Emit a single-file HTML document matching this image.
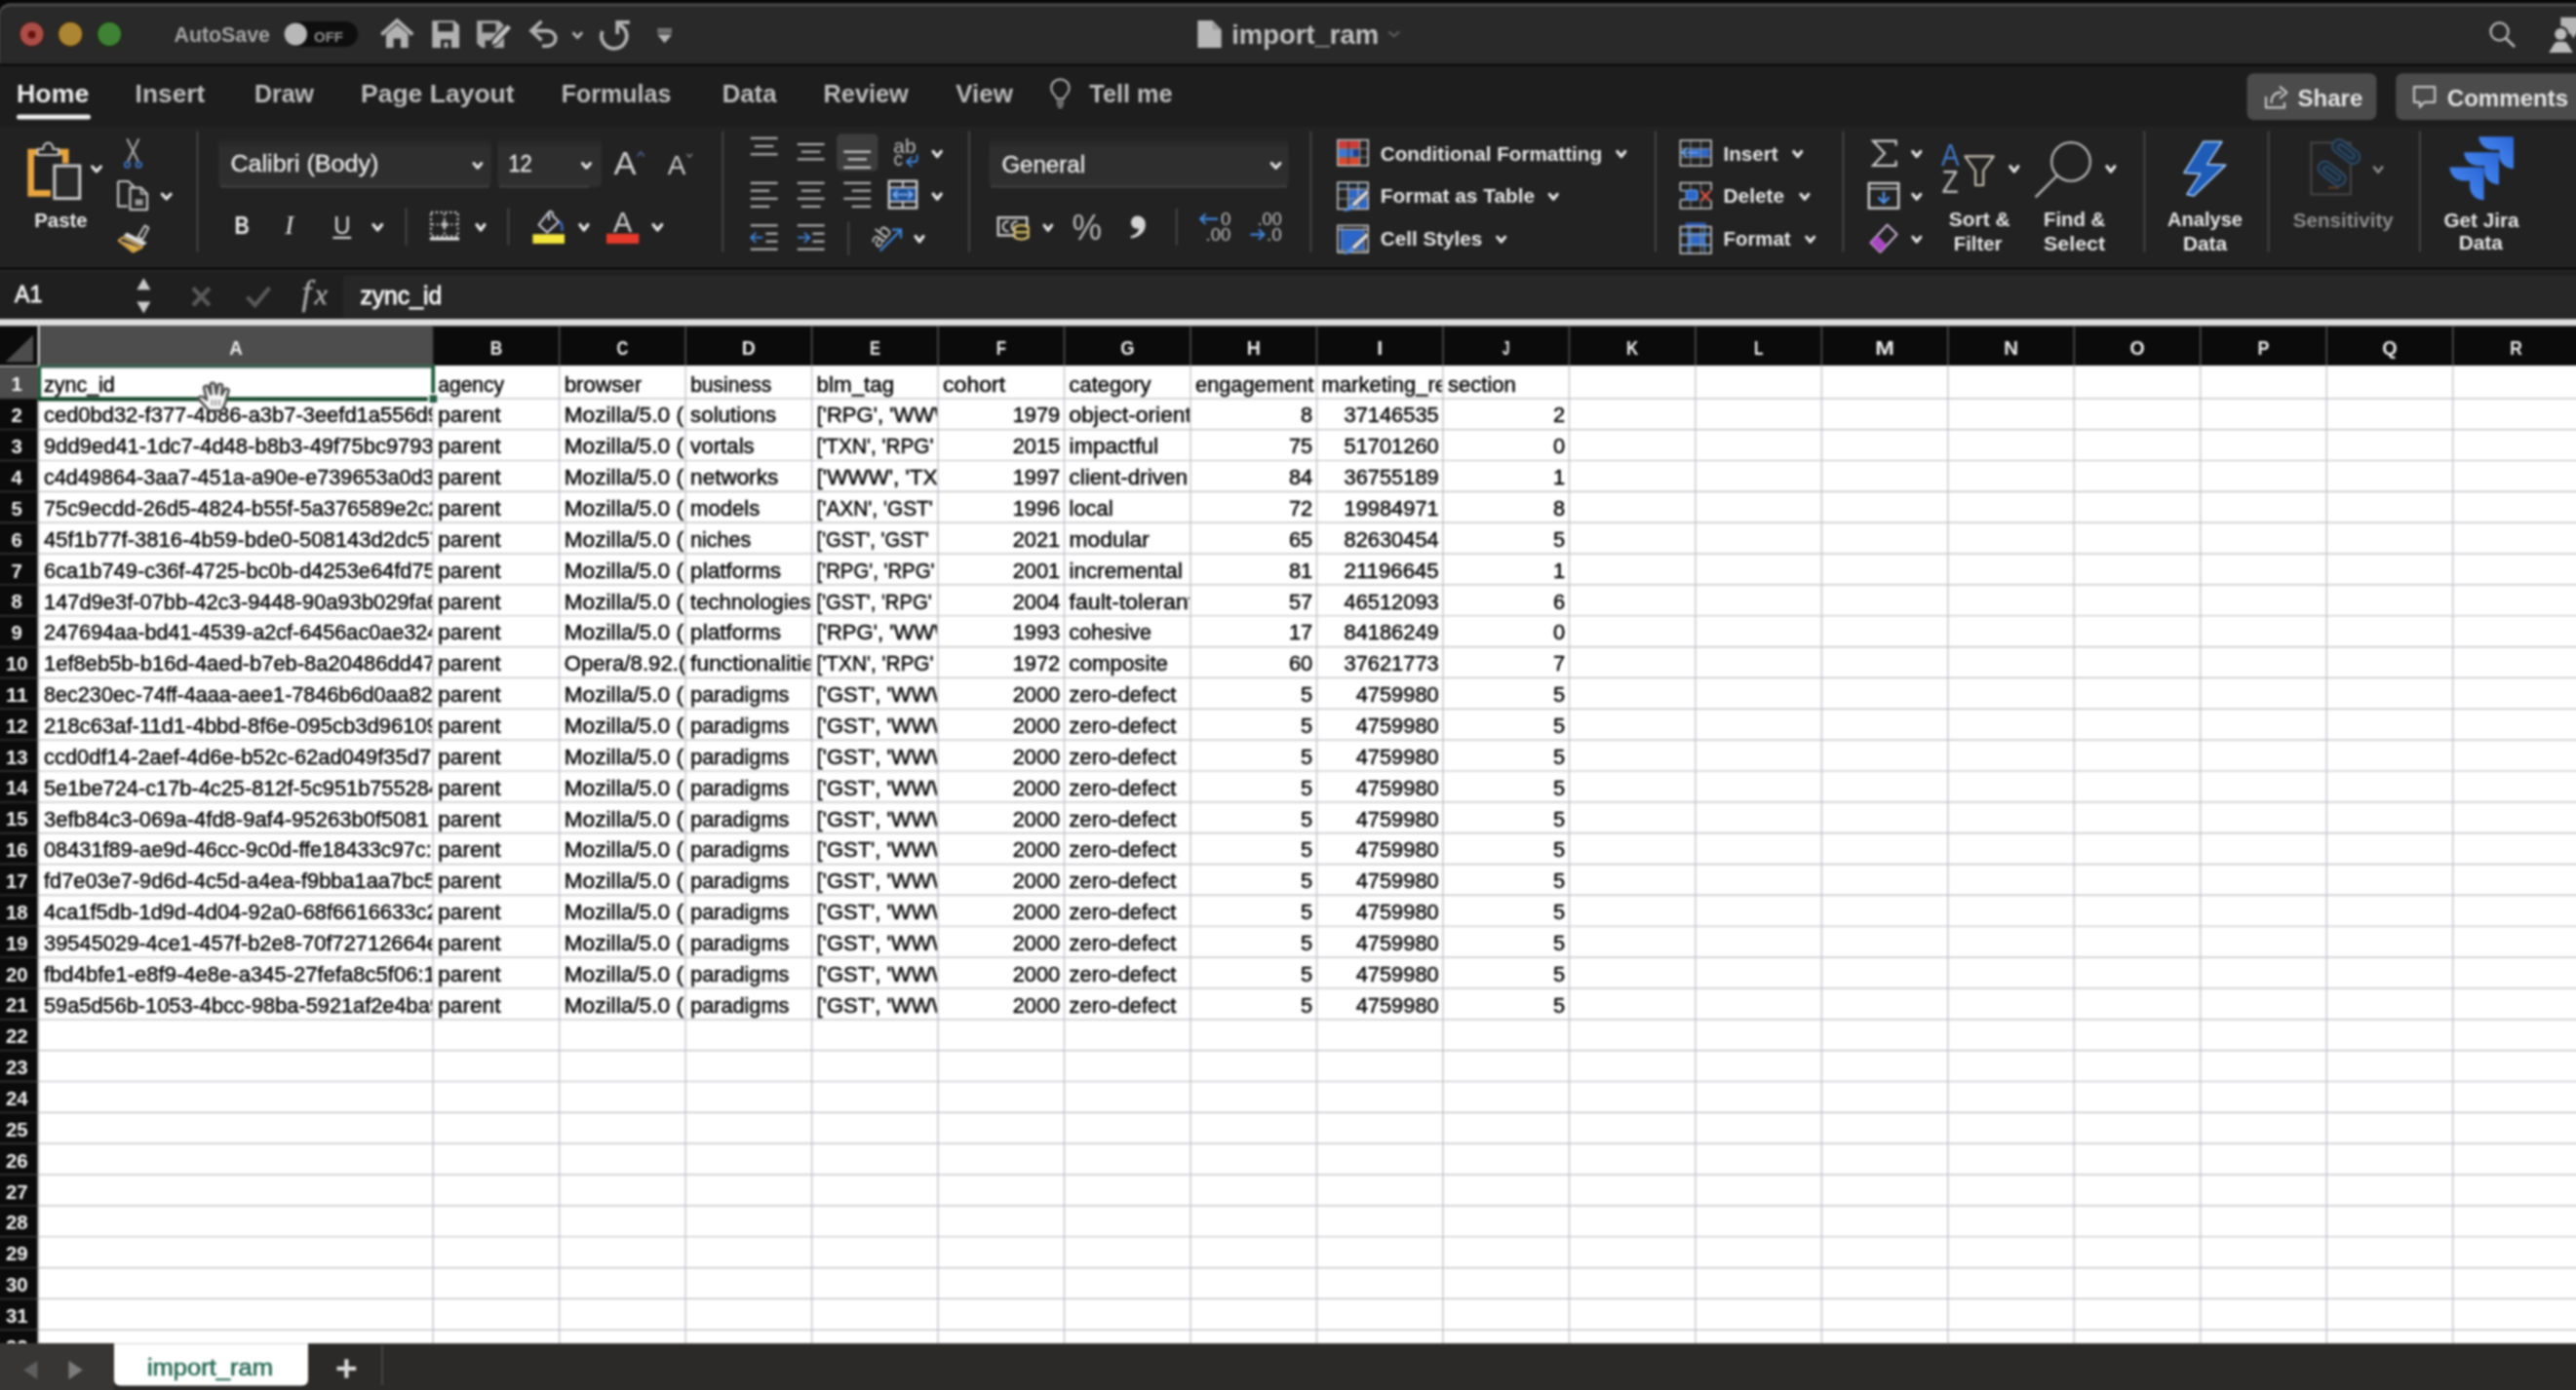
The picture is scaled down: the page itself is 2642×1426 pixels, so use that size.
<!DOCTYPE html>
<html lang="en"><head><meta charset="utf-8"><title>import_ram</title>
<style>
html,body{margin:0;padding:0;background:#1e1e1e;overflow:hidden;width:2642px;height:1426px}
#app{position:relative;width:2642px;height:1426px;overflow:hidden;background:#ffffff}
svg{display:block;position:absolute;left:-30px;top:-30px}
text{white-space:pre}
</style></head>
<body>
<div id="app">
<svg width="2702" height="1486" viewBox="-30 -30 2702 1486">
<filter id="soft" color-interpolation-filters="sRGB" filterUnits="userSpaceOnUse" x="-30" y="-30" width="2702" height="1486"><feGaussianBlur stdDeviation="0.8"/></filter>
<g filter="url(#soft)">
<rect x="-30.00" y="-30.00" width="2702.00" height="100.00" fill="#070707"/>
<path d="M-1.5 68 V15.2 A12 12 0 0 1 10.5 3.2 H2700 V68 Z" fill="#484848"/>
<path d="M0.2 68 V15.4 A10.3 8.8 0 0 1 10.5 6.6 H2700 V68 Z" fill="#292929"/>
<rect x="-30.00" y="65.30" width="2702.00" height="3.00" fill="#0d0d0d"/>
<circle cx="32.6" cy="35" r="13.2" fill="#3a1c18"/><circle cx="32.6" cy="35" r="11.9" fill="#ac4e48"/>
<circle cx="72.2" cy="35" r="13.2" fill="#3a2a0c"/><circle cx="72.2" cy="35" r="11.9" fill="#ad8633"/>
<circle cx="112.2" cy="35" r="13.2" fill="#1a3012"/><circle cx="112.2" cy="35" r="11.9" fill="#3f8135"/>
<circle cx="32.6" cy="35.4" r="4" fill="#66120c"/>
<text x="178.50" y="43.20" font-family="'Liberation Sans', sans-serif" font-size="21.6" fill="#a6a6a6" font-weight="700" textLength="98.50" lengthAdjust="spacingAndGlyphs">AutoSave</text>
<rect x="292.00" y="22.00" width="75.00" height="26.00" fill="#0e0e0e" rx="13"/>
<circle cx="303.3" cy="35" r="11.6" fill="#b8b8b8"/>
<text x="322.00" y="43.00" font-family="'Liberation Sans', sans-serif" font-size="15.5" fill="#909090" font-weight="700" textLength="30.00" lengthAdjust="spacingAndGlyphs">OFF</text>
<path d="M391.4 35.5 L407.3 21 L423.2 35.5" fill="none" stroke="#b2b2b2" stroke-width="3.8" stroke-linejoin="miter"/>
<path d="M396 35 L407.3 25.2 L418.6 35 V48.9 H411 V39.5 H403.6 V48.9 H396 Z" fill="#b2b2b2"/>
<path d="M443.3 21.2 H466 L471 26.2 V48.9 H443.3 Z" fill="#b2b2b2"/>
<rect x="449.20" y="23.20" width="15.60" height="9.20" fill="#292929"/>
<rect x="452.00" y="40.50" width="11.00" height="8.40" fill="#292929"/>
<rect x="455.50" y="43.50" width="4.00" height="5.40" fill="#b2b2b2"/>
<path d="M489.2 21.2 H512 L517 26.2 V48.9 H494 L489.2 44.5 Z" fill="#a9a9a9"/>
<rect x="494.60" y="24.00" width="14.00" height="9.50" fill="#292929"/>
<rect x="497.50" y="41.50" width="9.00" height="7.40" fill="#292929"/>
<path d="M503.5 41 L520.5 22.5 L526.5 28 L509.5 46.2 L501.8 48.6 Z" fill="#292929"/>
<path d="M505.8 41 L520.4 25.4 L524 28.7 L509.3 44.4 L504.2 46 Z" fill="#c4c4c4"/>
<path d="M555.5 21.8 L545 31.6 L555.5 41.4" fill="none" stroke="#b2b2b2" stroke-width="3.6" stroke-linejoin="miter"/>
<path d="M546 31.6 H561 C572 31.6 573.5 46.5 560.5 47.2 H556" fill="none" stroke="#b2b2b2" stroke-width="3.6"/>
<path d="M588.25 33.99 L592.30 38.61 L596.34 33.99" fill="none" stroke="#b4b4b4" stroke-width="2.91" stroke-linecap="round" stroke-linejoin="round"/>
<path d="M617.9 32 A12.9 12.9 0 1 0 640.6 29.8 L634 23.6" fill="none" stroke="#b2b2b2" stroke-width="3.7"/>
<path d="M633.2 35 V22.9 H645.8" fill="none" stroke="#b2b2b2" stroke-width="3.7" stroke-linejoin="miter"/>
<rect x="674.30" y="29.40" width="14.70" height="1.50" fill="#a8a8a8"/>
<rect x="674.30" y="32.20" width="14.70" height="1.50" fill="#a8a8a8"/>
<path d="M674.3 35.6 H689 L681.65 44.2 Z" fill="#b4b4b4"/>
<path d="M1228.4 21.1 H1243.6 L1252.7 30.4 V49.1 H1228.4 Z" fill="#b8b8b8"/>
<path d="M1243.6 21.1 V30.4 H1252.7 Z" fill="#9a9a9a"/>
<text x="1263.20" y="44.70" font-family="'Liberation Sans', sans-serif" font-size="27" fill="#c0c0c0" font-weight="700" textLength="151.00" lengthAdjust="spacingAndGlyphs">import_ram</text>
<path d="M1424.91 33.00 L1429.70 37.20 L1434.49 33.00" fill="none" stroke="#555555" stroke-width="2.522" stroke-linecap="round" stroke-linejoin="round"/>
<circle cx="2563.5" cy="32.4" r="9" fill="none" stroke="#b8b8b8" stroke-width="2.3"/>
<line x1="2570.20" y1="39.40" x2="2578.20" y2="47.20" stroke="#b8b8b8" stroke-width="2.8" stroke-linecap="round"/>
<path d="M2626.3 17.8 H2660 V34.4 H2642 L2639.4 39.6 L2636.4 34.4 H2626.3 Z" fill="#b6b6b6"/>
<circle cx="2626.3" cy="35" r="8.3" fill="#292929"/>
<circle cx="2626.3" cy="35" r="6.1" fill="#bcbcbc"/>
<path d="M2614.2 54 L2619.6 45 Q2621 42.8 2623.6 42.8 H2629.4 Q2632 42.8 2633.4 45 L2638.8 54 Z" fill="#bcbcbc"/>
<rect x="-30.00" y="67.80" width="2702.00" height="64.00" fill="#1d1d1d"/>
<text x="17.00" y="104.80" font-family="'Liberation Sans', sans-serif" font-size="25.5" fill="#ededed" font-weight="700" textLength="74.30" lengthAdjust="spacingAndGlyphs">Home</text>
<rect x="17.00" y="117.40" width="76.00" height="5.00" fill="#ececec" rx="2.5"/>
<text x="138.60" y="104.80" font-family="'Liberation Sans', sans-serif" font-size="25.5" fill="#bcbcbc" font-weight="700" textLength="71.70" lengthAdjust="spacingAndGlyphs">Insert</text>
<text x="260.90" y="104.80" font-family="'Liberation Sans', sans-serif" font-size="25.5" fill="#bcbcbc" font-weight="700" textLength="61.10" lengthAdjust="spacingAndGlyphs">Draw</text>
<text x="370.00" y="104.80" font-family="'Liberation Sans', sans-serif" font-size="25.5" fill="#bcbcbc" font-weight="700" textLength="157.60" lengthAdjust="spacingAndGlyphs">Page Layout</text>
<text x="575.80" y="104.80" font-family="'Liberation Sans', sans-serif" font-size="25.5" fill="#bcbcbc" font-weight="700" textLength="112.50" lengthAdjust="spacingAndGlyphs">Formulas</text>
<text x="740.70" y="104.80" font-family="'Liberation Sans', sans-serif" font-size="25.5" fill="#bcbcbc" font-weight="700" textLength="55.80" lengthAdjust="spacingAndGlyphs">Data</text>
<text x="844.50" y="104.80" font-family="'Liberation Sans', sans-serif" font-size="25.5" fill="#bcbcbc" font-weight="700" textLength="87.30" lengthAdjust="spacingAndGlyphs">Review</text>
<text x="980.30" y="104.80" font-family="'Liberation Sans', sans-serif" font-size="25.5" fill="#bcbcbc" font-weight="700" textLength="58.60" lengthAdjust="spacingAndGlyphs">View</text>
<text x="1117.30" y="104.80" font-family="'Liberation Sans', sans-serif" font-size="25.5" fill="#bcbcbc" font-weight="700" textLength="85.40" lengthAdjust="spacingAndGlyphs">Tell me</text>
<path d="M1083.8 101.4 C1083.8 98.4 1078.2 96 1078.2 90.4 C1078.2 85 1082.3 81.4 1087.4 81.4 C1092.5 81.4 1096.6 85 1096.6 90.4 C1096.6 96 1091 98.4 1091 101.4 Z" fill="none" stroke="#a6a6a6" stroke-width="2.1" stroke-linejoin="round"/>
<line x1="1083.80" y1="104.60" x2="1091.00" y2="104.60" stroke="#a6a6a6" stroke-width="1.6" />
<line x1="1083.80" y1="107.40" x2="1091.00" y2="107.40" stroke="#a6a6a6" stroke-width="1.6" />
<line x1="1085.20" y1="110.20" x2="1089.60" y2="110.20" stroke="#a6a6a6" stroke-width="1.6" />
<rect x="2304.60" y="75.20" width="132.80" height="47.80" fill="#4b4b4b" rx="7"/>
<path d="M2324 99 V110.4 H2343 V105" fill="none" stroke="#c4c4c4" stroke-width="2.2"/>
<path d="M2329.5 106 C2329.5 98 2334 94.6 2340 94.6" fill="none" stroke="#c4c4c4" stroke-width="2.2"/>
<path d="M2338 88.6 L2345.4 94.8 L2338 101" fill="none" stroke="#c4c4c4" stroke-width="2.2" stroke-linejoin="round"/>
<text x="2356.60" y="108.90" font-family="'Liberation Sans', sans-serif" font-size="23.6" fill="#e4e4e4" font-weight="700" textLength="66.70" lengthAdjust="spacingAndGlyphs">Share</text>
<rect x="2457.30" y="75.20" width="230.00" height="47.80" fill="#4b4b4b" rx="7"/>
<path d="M2476 89.2 H2497.2 V104.8 H2486.5 L2481.8 110 V104.8 H2476 Z" fill="none" stroke="#c4c4c4" stroke-width="2.2" stroke-linejoin="round"/>
<text x="2509.80" y="108.90" font-family="'Liberation Sans', sans-serif" font-size="23.6" fill="#e4e4e4" font-weight="700" textLength="124.30" lengthAdjust="spacingAndGlyphs">Comments</text>
<rect x="-30.00" y="130.00" width="2702.00" height="143.40" fill="#222222"/>
<rect x="-30.00" y="273.20" width="2702.00" height="4.60" fill="#0d0d0d"/>
<line x1="202.50" y1="134.50" x2="202.50" y2="258.50" stroke="#4a4a4a" stroke-width="1.68" />
<line x1="741.30" y1="134.50" x2="741.30" y2="258.50" stroke="#4a4a4a" stroke-width="1.68" />
<line x1="994.00" y1="134.50" x2="994.00" y2="258.50" stroke="#4a4a4a" stroke-width="1.68" />
<line x1="1344.40" y1="134.50" x2="1344.40" y2="258.50" stroke="#4a4a4a" stroke-width="1.68" />
<line x1="1697.90" y1="134.50" x2="1697.90" y2="258.50" stroke="#4a4a4a" stroke-width="1.68" />
<line x1="1890.40" y1="134.50" x2="1890.40" y2="258.50" stroke="#4a4a4a" stroke-width="1.68" />
<line x1="2199.40" y1="134.50" x2="2199.40" y2="258.50" stroke="#4a4a4a" stroke-width="1.68" />
<line x1="2326.60" y1="134.50" x2="2326.60" y2="258.50" stroke="#4a4a4a" stroke-width="1.68" />
<line x1="2481.90" y1="134.50" x2="2481.90" y2="258.50" stroke="#4a4a4a" stroke-width="1.68" />
<line x1="416.50" y1="213.50" x2="416.50" y2="251.60" stroke="#4a4a4a" stroke-width="1.68" />
<line x1="521.40" y1="213.50" x2="521.40" y2="251.60" stroke="#4a4a4a" stroke-width="1.68" />
<line x1="1206.70" y1="213.50" x2="1206.70" y2="251.60" stroke="#4a4a4a" stroke-width="1.68" />
<line x1="870.30" y1="227.50" x2="870.30" y2="262.00" stroke="#4a4a4a" stroke-width="1.68" />
<path d="M51.9 198.4 H31.7 V156 H67.2 V167.6" fill="none" stroke="#e6a53e" stroke-width="6.6" stroke-linejoin="miter"/>
<path d="M38.6 159 V153 H44.4 C44.4 144.4 54.4 144.4 54.4 153 H60.2 V159 Z" fill="#222222" stroke="#c8c8c8" stroke-width="2.18" stroke-linejoin="round"/>
<rect x="55.90" y="170.10" width="25.90" height="33.50" fill="#292929" stroke="#c8c8c8" stroke-width="3"/>
<path d="M94.60 170.91 L99.00 175.89 L103.40 170.91" fill="none" stroke="#e6e6e6" stroke-width="3.104" stroke-linecap="round" stroke-linejoin="round"/>
<text x="35.20" y="233.20" font-family="'Liberation Sans', sans-serif" font-size="20.5" fill="#e6e6e6" font-weight="700" textLength="54.50" lengthAdjust="spacingAndGlyphs">Paste</text>
<line x1="130.40" y1="142.40" x2="141.60" y2="165.40" stroke="#b0b0b0" stroke-width="2.02" />
<line x1="142.40" y1="142.40" x2="131.20" y2="165.40" stroke="#b0b0b0" stroke-width="2.02" />
<circle cx="130.6" cy="169" r="2.7" fill="none" stroke="#3f6fb8" stroke-width="2"/>
<circle cx="142.2" cy="169" r="2.7" fill="none" stroke="#3f6fb8" stroke-width="2"/>
<path d="M121.2 186 H131.6 L137.4 191.6 M121.2 186 V211.6 H131" fill="none" stroke="#c4c4c4" stroke-width="2.18"/>
<path d="M133.4 192.6 H144.6 L151 199 V215.2 H133.4 Z" fill="#222222" stroke="#c4c4c4" stroke-width="2.18" stroke-linejoin="round"/>
<path d="M144.6 192.6 V199 H151" fill="none" stroke="#c4c4c4" stroke-width="1.68"/>
<rect x="138.60" y="204.40" width="8.00" height="6.20" fill="#9a9a9a"/>
<path d="M166.30 199.11 L170.70 204.09 L175.10 199.11" fill="none" stroke="#e6e6e6" stroke-width="3.104" stroke-linecap="round" stroke-linejoin="round"/>
<path d="M141.5 243 L148.6 231.4 L152.4 233.8 L146.2 245.6 Z" fill="#222222" stroke="#cfcfcf" stroke-width="1.85" stroke-linejoin="round"/>
<path d="M130 238.4 L150.8 249 L146.6 252.2 L126.6 242 Z" fill="#dcdcdc"/>
<path d="M126 243.6 L146 253.6 L136.4 258.6 L121.6 246.8 Z" fill="#1d2a4a" stroke="#e6b24a" stroke-width="1.85" stroke-linejoin="round"/>
<path d="M124 247 L136.6 257.6 L143 254 Z" fill="#e6b24a"/>
<linearGradient id="bx" x1="0" y1="0" x2="0" y2="1"><stop offset="0" stop-color="#232323"/><stop offset="0.24" stop-color="#2e2e2e"/><stop offset="1" stop-color="#2f2f2f"/></linearGradient>
<rect x="224.30" y="141.00" width="279.30" height="51.30" fill="url(#bx)" rx="5"/>
<rect x="226.00" y="190.60" width="276.00" height="1.70" fill="#474747"/>
<text x="236.50" y="176.20" font-family="'Liberation Sans', sans-serif" font-size="23" fill="#ededed" textLength="151.80" lengthAdjust="spacingAndGlyphs" stroke="#ededed" stroke-width="0.3">Calibri (Body)</text>
<path d="M485.95 167.58 L489.90 172.22 L493.85 167.58" fill="none" stroke="#e6e6e6" stroke-width="3.007" stroke-linecap="round" stroke-linejoin="round"/>
<rect x="510.50" y="141.00" width="106.30" height="51.30" fill="url(#bx)" rx="5"/>
<rect x="512.00" y="190.60" width="92.00" height="1.70" fill="#474747"/>
<text x="521.40" y="176.40" font-family="'Liberation Sans', sans-serif" font-size="23" fill="#ededed" textLength="24.30" lengthAdjust="spacingAndGlyphs" stroke="#ededed" stroke-width="0.3">12</text>
<path d="M597.45 167.58 L601.50 172.22 L605.55 167.58" fill="none" stroke="#e6e6e6" stroke-width="3.007" stroke-linecap="round" stroke-linejoin="round"/>
<text x="629.60" y="178.60" font-family="'Liberation Sans', sans-serif" font-size="34" fill="#cfcfcf" textLength="23.10" lengthAdjust="spacingAndGlyphs">A</text>
<path d="M653.8 160.4 L657.2 156 L660.6 160.4" fill="none" stroke="#4a5a86" stroke-width="1.85"/>
<text x="684.70" y="178.60" font-family="'Liberation Sans', sans-serif" font-size="27" fill="#cfcfcf" textLength="18.60" lengthAdjust="spacingAndGlyphs">A</text>
<path d="M704.4 158 L707.2 161 L710 158" fill="none" stroke="#7a7a7a" stroke-width="1.68"/>
<text x="240.40" y="239.70" font-family="'Liberation Sans', sans-serif" font-size="25" fill="#e6e6e6" font-weight="700" textLength="15.30" lengthAdjust="spacingAndGlyphs">B</text>
<text x="292.20" y="239.70" font-family="'Liberation Serif', serif" font-size="27" fill="#e6e6e6" font-style="italic">I</text>
<text x="342.20" y="239.50" font-family="'Liberation Sans', sans-serif" font-size="25" fill="#dcdcdc" textLength="17.30" lengthAdjust="spacingAndGlyphs">U</text>
<rect x="341.40" y="242.80" width="18.80" height="2.20" fill="#dcdcdc"/>
<path d="M382.95 230.55 L387.30 236.05 L391.65 230.55" fill="none" stroke="#e6e6e6" stroke-width="3.2009999999999996" stroke-linecap="round" stroke-linejoin="round"/>
<rect x="442" y="217.8" width="27.6" height="24.6" fill="none" stroke="#d0d0d0" stroke-width="2.2" stroke-dasharray="2.2 2.6"/>
<line x1="455.80" y1="219.00" x2="455.80" y2="242.00" stroke="#d0d0d0" stroke-width="1.85" stroke-dasharray="2.2 2.6"/>
<line x1="443.00" y1="230.40" x2="469.00" y2="230.40" stroke="#d0d0d0" stroke-width="1.85" stroke-dasharray="2.2 2.6"/>
<line x1="452.40" y1="230.40" x2="459.60" y2="230.40" stroke="#bdbdbd" stroke-width="3.2" />
<line x1="455.80" y1="226.60" x2="455.80" y2="234.20" stroke="#bdbdbd" stroke-width="3.2" />
<rect x="440.80" y="243.60" width="30.20" height="2.80" fill="#f0f0f0"/>
<path d="M489.05 230.55 L493.00 236.05 L496.95 230.55" fill="none" stroke="#e6e6e6" stroke-width="3.2009999999999996" stroke-linecap="round" stroke-linejoin="round"/>
<path d="M563 217.6 L552.6 230.6 L561.2 238.6 L573.2 227.6 L566.8 221.2 V218.4 Q564.8 215.6 563 217.6 V226" fill="none" stroke="#c9c9d6" stroke-width="2.02" stroke-linejoin="round"/>
<path d="M573.4 227 Q577.4 229.6 576.4 237" fill="none" stroke="#3d6fd0" stroke-width="2.35"/>
<rect x="546.40" y="240.30" width="32.60" height="9.60" fill="#f4e63e"/>
<path d="M594.85 230.55 L598.90 236.05 L602.95 230.55" fill="none" stroke="#e6e6e6" stroke-width="3.2009999999999996" stroke-linecap="round" stroke-linejoin="round"/>
<text x="629.00" y="238.40" font-family="'Liberation Sans', sans-serif" font-size="29" fill="#d2d2d2" textLength="19.20" lengthAdjust="spacingAndGlyphs">A</text>
<rect x="622.00" y="239.70" width="33.30" height="10.20" fill="#e63a2b"/>
<path d="M670.05 230.55 L674.40 236.05 L678.75 230.55" fill="none" stroke="#e6e6e6" stroke-width="3.2009999999999996" stroke-linecap="round" stroke-linejoin="round"/>
<line x1="769.80" y1="141.80" x2="797.60" y2="141.80" stroke="#bebebe" stroke-width="2.02" />
<line x1="774.00" y1="150.00" x2="793.40" y2="150.00" stroke="#bebebe" stroke-width="2.02" />
<line x1="769.80" y1="158.30" x2="797.60" y2="158.30" stroke="#bebebe" stroke-width="2.02" />
<line x1="817.80" y1="148.00" x2="845.60" y2="148.00" stroke="#bebebe" stroke-width="2.02" />
<line x1="822.00" y1="155.70" x2="841.40" y2="155.70" stroke="#bebebe" stroke-width="2.02" />
<line x1="817.80" y1="163.40" x2="845.60" y2="163.40" stroke="#bebebe" stroke-width="2.02" />
<rect x="858.10" y="137.20" width="42.30" height="38.40" fill="#3c3c3c" rx="5"/>
<line x1="865.30" y1="155.70" x2="893.10" y2="155.70" stroke="#d8d8d8" stroke-width="2.02" />
<line x1="869.50" y1="163.40" x2="888.90" y2="163.40" stroke="#d8d8d8" stroke-width="2.02" />
<line x1="865.30" y1="171.80" x2="893.10" y2="171.80" stroke="#d8d8d8" stroke-width="2.02" />
<line x1="769.80" y1="187.80" x2="797.60" y2="187.80" stroke="#bebebe" stroke-width="2.02" />
<line x1="769.80" y1="195.70" x2="789.20" y2="195.70" stroke="#bebebe" stroke-width="2.02" />
<line x1="769.80" y1="203.80" x2="797.60" y2="203.80" stroke="#bebebe" stroke-width="2.02" />
<line x1="769.80" y1="211.90" x2="789.20" y2="211.90" stroke="#bebebe" stroke-width="2.02" />
<line x1="817.80" y1="187.80" x2="845.60" y2="187.80" stroke="#bebebe" stroke-width="2.02" />
<line x1="822.00" y1="195.70" x2="841.40" y2="195.70" stroke="#bebebe" stroke-width="2.02" />
<line x1="817.80" y1="203.80" x2="845.60" y2="203.80" stroke="#bebebe" stroke-width="2.02" />
<line x1="822.00" y1="211.90" x2="841.40" y2="211.90" stroke="#bebebe" stroke-width="2.02" />
<line x1="865.30" y1="187.80" x2="893.10" y2="187.80" stroke="#bebebe" stroke-width="2.02" />
<line x1="873.70" y1="195.70" x2="893.10" y2="195.70" stroke="#bebebe" stroke-width="2.02" />
<line x1="865.30" y1="203.80" x2="893.10" y2="203.80" stroke="#bebebe" stroke-width="2.02" />
<line x1="873.70" y1="211.90" x2="893.10" y2="211.90" stroke="#bebebe" stroke-width="2.02" />
<line x1="769.80" y1="231.30" x2="797.60" y2="231.30" stroke="#bebebe" stroke-width="2.02" />
<line x1="785.40" y1="239.70" x2="797.60" y2="239.70" stroke="#bebebe" stroke-width="2.02" />
<line x1="785.40" y1="247.70" x2="797.60" y2="247.70" stroke="#bebebe" stroke-width="2.02" />
<line x1="769.80" y1="255.70" x2="797.60" y2="255.70" stroke="#bebebe" stroke-width="2.02" />
<line x1="817.80" y1="231.30" x2="845.60" y2="231.30" stroke="#bebebe" stroke-width="2.02" />
<line x1="833.40" y1="239.70" x2="845.60" y2="239.70" stroke="#bebebe" stroke-width="2.02" />
<line x1="833.40" y1="247.70" x2="845.60" y2="247.70" stroke="#bebebe" stroke-width="2.02" />
<line x1="817.80" y1="255.70" x2="845.60" y2="255.70" stroke="#bebebe" stroke-width="2.02" />
<path d="M782.4 243.7 H770.6 M775.4 238.6 L770.2 243.7 L775.4 248.8" fill="none" stroke="#3f86dc" stroke-width="1.76"/>
<path d="M818 243.7 H829.8 M825 238.6 L830.2 243.7 L825 248.8" fill="none" stroke="#3f86dc" stroke-width="1.76"/>
<text x="916.30" y="156.60" font-family="'Liberation Sans', sans-serif" font-size="21" fill="#bcbcbc" textLength="23.30" lengthAdjust="spacingAndGlyphs">ab</text>
<text x="916.60" y="170.20" font-family="'Liberation Sans', sans-serif" font-size="21" fill="#bcbcbc" textLength="9.40" lengthAdjust="spacingAndGlyphs">c</text>
<path d="M940.6 158.6 V163.4 Q940.6 166 938 166 H930.6 M935.4 160.8 L930 166 L935.4 171.2" fill="none" stroke="#3f86dc" stroke-width="1.85" stroke-linejoin="round"/>
<path d="M957.15 155.35 L961.20 160.65 L965.25 155.35" fill="none" stroke="#e6e6e6" stroke-width="3.2009999999999996" stroke-linecap="round" stroke-linejoin="round"/>
<rect x="911.80" y="185.80" width="28.40" height="27.60" fill="#222222" stroke="#cfcfcf" stroke-width="2.4"/>
<rect x="913.20" y="192.60" width="25.60" height="14.00" fill="#1f4f95"/>
<line x1="926.00" y1="186.00" x2="926.00" y2="192.40" stroke="#cfcfcf" stroke-width="1.85" />
<line x1="926.00" y1="206.80" x2="926.00" y2="213.20" stroke="#cfcfcf" stroke-width="1.85" />
<line x1="912.00" y1="192.40" x2="940.00" y2="192.40" stroke="#cfcfcf" stroke-width="1.68" />
<line x1="912.00" y1="206.80" x2="940.00" y2="206.80" stroke="#cfcfcf" stroke-width="1.68" />
<path d="M916.6 199.6 H935.4 M920.6 195.6 L916.4 199.6 L920.6 203.6 M931.4 195.6 L935.6 199.6 L931.4 203.6" fill="none" stroke="#7fb2f2" stroke-width="1.85"/>
<path d="M957.15 198.95 L961.20 204.25 L965.25 198.95" fill="none" stroke="#e6e6e6" stroke-width="3.2009999999999996" stroke-linecap="round" stroke-linejoin="round"/>
<g transform="rotate(-52 905 243)">
<text x="893.00" y="247.50" font-family="'Liberation Sans', sans-serif" font-size="21" fill="#c9c9c9" textLength="23.00" lengthAdjust="spacingAndGlyphs">ab</text>
</g>
<path d="M902.6 257.6 L923.4 236.4 M915 235.6 H924 V244.6" fill="none" stroke="#3f86dc" stroke-width="2.18"/>
<path d="M939.05 242.55 L943.00 247.85 L946.95 242.55" fill="none" stroke="#e6e6e6" stroke-width="3.2009999999999996" stroke-linecap="round" stroke-linejoin="round"/>
<rect x="1014.50" y="141.00" width="307.00" height="51.30" fill="url(#bx)" rx="5"/>
<rect x="1016.00" y="190.60" width="304.00" height="1.70" fill="#474747"/>
<text x="1027.40" y="176.60" font-family="'Liberation Sans', sans-serif" font-size="23" fill="#ededed" textLength="85.60" lengthAdjust="spacingAndGlyphs" stroke="#ededed" stroke-width="0.3">General</text>
<path d="M1304.25 167.48 L1308.60 172.32 L1312.95 167.48" fill="none" stroke="#e6e6e6" stroke-width="3.007" stroke-linecap="round" stroke-linejoin="round"/>
<rect x="1023.80" y="223.20" width="29.40" height="18.20" fill="#222222" stroke="#d0d0d0" stroke-width="2.4"/>
<path d="M1034.6 227.4 A5 5 0 1 0 1034.6 237.2 M1043.6 227.4 A5 5 0 1 0 1043.6 237.2" fill="none" stroke="#d0d0d0" stroke-width="2.02"/>
<path d="M1040.6 233 Q1047.6 229 1054.6 233 V243.4 Q1047.6 247.6 1040.6 243.4 Z" fill="#2a2618" stroke="#e9d27a" stroke-width="2.02"/>
<line x1="1041.60" y1="238.20" x2="1053.60" y2="238.20" stroke="#e9d27a" stroke-width="2.02" />
<path d="M1071.10 231.11 L1074.90 236.29 L1078.70 231.11" fill="none" stroke="#e6e6e6" stroke-width="3.104" stroke-linecap="round" stroke-linejoin="round"/>
<text x="1099.40" y="245.60" font-family="'Liberation Sans', sans-serif" font-size="37" fill="#bdbdbd" textLength="30.50" lengthAdjust="spacingAndGlyphs">%</text>
<path d="M1166.4 221.4 C1171.6 221.4 1174.8 225 1174.8 230.4 C1174.8 237.6 1169.4 242.6 1160.2 244.6 L1159.4 242.6 C1164.6 241 1167.6 238.4 1168 234.6 C1163.6 235.2 1160 232.4 1160 228.2 C1160 224.2 1162.8 221.4 1166.4 221.4 Z" fill="#d4d4d4"/>
<text x="1252.00" y="230.60" font-family="'Liberation Sans', sans-serif" font-size="19" fill="#c4c4c4" textLength="10.40" lengthAdjust="spacingAndGlyphs">0</text>
<text x="1236.60" y="246.60" font-family="'Liberation Sans', sans-serif" font-size="19" fill="#c4c4c4" textLength="25.80" lengthAdjust="spacingAndGlyphs">.00</text>
<path d="M1249 224.6 H1231.4 M1236.6 219.4 L1231.2 224.6 L1236.6 229.8" fill="none" stroke="#3f86dc" stroke-width="2.1"/>
<text x="1289.60" y="230.60" font-family="'Liberation Sans', sans-serif" font-size="19" fill="#c4c4c4" textLength="25.10" lengthAdjust="spacingAndGlyphs">.00</text>
<text x="1299.00" y="246.60" font-family="'Liberation Sans', sans-serif" font-size="19" fill="#c4c4c4" textLength="15.70" lengthAdjust="spacingAndGlyphs">.0</text>
<path d="M1282.4 240.6 H1296 M1291 235.4 L1296.4 240.6 L1291 245.8" fill="none" stroke="#3f86dc" stroke-width="2.1"/>
<rect x="1373.00" y="144.60" width="21.40" height="7.60" fill="#cf3b36"/>
<rect x="1373.00" y="153.20" width="15.00" height="7.60" fill="#3a78d8"/>
<rect x="1388.00" y="153.20" width="6.40" height="7.60" fill="#1d3f86"/>
<rect x="1373.00" y="161.80" width="21.40" height="7.40" fill="#d8482c"/>
<line x1="1372.00" y1="152.60" x2="1403.00" y2="152.60" stroke="#8c8c8c" stroke-width="1.1" />
<line x1="1372.00" y1="161.20" x2="1403.00" y2="161.20" stroke="#8c8c8c" stroke-width="1.1" />
<line x1="1383.00" y1="144.00" x2="1383.00" y2="169.60" stroke="#3a2a2a" stroke-width="1" />
<line x1="1394.60" y1="144.00" x2="1394.60" y2="169.60" stroke="#a0a0a0" stroke-width="1.2" />
<rect x="1372" y="143.6" width="31.2" height="26.2" fill="none" stroke="#d2d2d2" stroke-width="1.5"/>
<text x="1415.80" y="164.50" font-family="'Liberation Sans', sans-serif" font-size="21" fill="#e6e6e6" font-weight="700" textLength="227.30" lengthAdjust="spacingAndGlyphs">Conditional Formatting</text>
<path d="M1658.80 155.51 L1662.80 160.49 L1666.80 155.51" fill="none" stroke="#e6e6e6" stroke-width="3.104" stroke-linecap="round" stroke-linejoin="round"/>
<rect x="1373.00" y="188.00" width="29.00" height="5.40" fill="#1a2836"/>
<rect x="1383.40" y="194.60" width="19.00" height="19.00" fill="#2c66c8"/>
<line x1="1382.60" y1="187.40" x2="1382.60" y2="214.00" stroke="#bdbdbd" stroke-width="1.2" />
<line x1="1393.00" y1="187.40" x2="1393.00" y2="214.00" stroke="#bdbdbd" stroke-width="1.2" />
<line x1="1372.00" y1="194.00" x2="1403.00" y2="194.00" stroke="#bdbdbd" stroke-width="1.2" />
<line x1="1372.00" y1="204.00" x2="1403.00" y2="204.00" stroke="#9a9a9a" stroke-width="1.1" />
<rect x="1372" y="187.2" width="31.2" height="27.2" fill="none" stroke="#d2d2d2" stroke-width="1.5"/>
<path d="M1401.4 194.6 L1405 197.6 L1389.4 212.4 L1385.6 209 Z" fill="#d4d4d8" stroke="#222222" stroke-width="0.9"/>
<path d="M1385.6 209 L1389.4 212.4 Q1384 217.6 1377.4 216.6 Q1382 214.6 1385.6 209 Z" fill="#4f8fe8"/>
<text x="1415.80" y="208.30" font-family="'Liberation Sans', sans-serif" font-size="21" fill="#e6e6e6" font-weight="700" textLength="158.40" lengthAdjust="spacingAndGlyphs">Format as Table</text>
<path d="M1589.20 199.31 L1593.20 204.29 L1597.20 199.31" fill="none" stroke="#e6e6e6" stroke-width="3.104" stroke-linecap="round" stroke-linejoin="round"/>
<rect x="1376.40" y="236.20" width="22.60" height="20.40" fill="#2c66c8"/>
<rect x="1373.00" y="236.20" width="3.40" height="20.40" fill="#16244a"/>
<line x1="1372.00" y1="235.40" x2="1403.00" y2="235.40" stroke="#c4c4c4" stroke-width="1.3" />
<line x1="1376.00" y1="231.60" x2="1376.00" y2="258.60" stroke="#7fa8e6" stroke-width="1.2" />
<line x1="1399.40" y1="231.60" x2="1399.40" y2="258.60" stroke="#9a9a9a" stroke-width="1" />
<line x1="1372.00" y1="256.80" x2="1403.00" y2="256.80" stroke="#9a9a9a" stroke-width="1" />
<rect x="1372" y="231.4" width="31.2" height="27.6" fill="none" stroke="#d2d2d2" stroke-width="1.5"/>
<path d="M1401.4 238.6 L1405 241.6 L1389.4 256.4 L1385.6 253 Z" fill="#d4d4d8" stroke="#222222" stroke-width="0.9"/>
<path d="M1385.6 253 L1389.4 256.4 Q1384 261.6 1377.4 260.6 Q1382 258.6 1385.6 253 Z" fill="#4f8fe8"/>
<text x="1415.80" y="252.10" font-family="'Liberation Sans', sans-serif" font-size="21" fill="#e6e6e6" font-weight="700" textLength="104.50" lengthAdjust="spacingAndGlyphs">Cell Styles</text>
<path d="M1535.70 243.11 L1539.70 248.09 L1543.70 243.11" fill="none" stroke="#e6e6e6" stroke-width="3.104" stroke-linecap="round" stroke-linejoin="round"/>
<rect x="1732.00" y="151.80" width="21.00" height="9.60" fill="#2c66c8"/>
<line x1="1733.93" y1="144.00" x2="1733.93" y2="170.00" stroke="#8e8e8e" stroke-width="1.1" />
<line x1="1744.47" y1="144.00" x2="1744.47" y2="170.00" stroke="#8e8e8e" stroke-width="1.1" />
<line x1="1723.40" y1="152.67" x2="1755.00" y2="152.67" stroke="#8e8e8e" stroke-width="1.1" />
<line x1="1723.40" y1="161.33" x2="1755.00" y2="161.33" stroke="#8e8e8e" stroke-width="1.1" />
<rect x="1723.4" y="144" width="31.6" height="26" fill="none" stroke="#d2d2d2" stroke-width="1.5"/>
<path d="M1742 156.6 H1725.4 M1730.6 151.8 L1725 156.6 L1730.6 161.4" fill="none" stroke="#6aa8f4" stroke-width="1.85"/>
<text x="1767.60" y="164.50" font-family="'Liberation Sans', sans-serif" font-size="21" fill="#e6e6e6" font-weight="700" textLength="56.00" lengthAdjust="spacingAndGlyphs">Insert</text>
<path d="M1839.70 155.51 L1843.70 160.49 L1847.70 155.51" fill="none" stroke="#e6e6e6" stroke-width="3.104" stroke-linecap="round" stroke-linejoin="round"/>
<line x1="1733.93" y1="187.60" x2="1733.93" y2="213.80" stroke="#8e8e8e" stroke-width="1.1" />
<line x1="1744.47" y1="187.60" x2="1744.47" y2="213.80" stroke="#8e8e8e" stroke-width="1.1" />
<line x1="1723.40" y1="196.33" x2="1755.00" y2="196.33" stroke="#8e8e8e" stroke-width="1.1" />
<line x1="1723.40" y1="205.07" x2="1755.00" y2="205.07" stroke="#8e8e8e" stroke-width="1.1" />
<rect x="1723.4" y="187.6" width="31.6" height="26.2" fill="none" stroke="#d2d2d2" stroke-width="1.5"/>
<rect x="1721.00" y="195.40" width="36.00" height="10.00" fill="#222222"/>
<rect x="1729.40" y="195.20" width="11.60" height="10.00" fill="#2c66c8" rx="2.4" stroke="#6aa8f4" stroke-width="1.3"/>
<path d="M1723.4 195.6 H1729 M1723.4 204.8 H1729" fill="none" stroke="#c4c4c4" stroke-width="1.4"/>
<path d="M1744.4 196 L1754 206 M1754 196 L1744.4 206" fill="none" stroke="#e2584a" stroke-width="2.18"/>
<text x="1767.60" y="208.30" font-family="'Liberation Sans', sans-serif" font-size="21" fill="#e6e6e6" font-weight="700" textLength="62.40" lengthAdjust="spacingAndGlyphs">Delete</text>
<path d="M1846.90 199.31 L1850.90 204.29 L1854.90 199.31" fill="none" stroke="#e6e6e6" stroke-width="3.104" stroke-linecap="round" stroke-linejoin="round"/>
<rect x="1728.60" y="228.40" width="21.20" height="3.60" fill="#2c5cb8"/>
<rect x="1732.00" y="240.00" width="16.00" height="11.40" fill="#2c66c8"/>
<line x1="1733.93" y1="232.60" x2="1733.93" y2="260.00" stroke="#8e8e8e" stroke-width="1.1" />
<line x1="1744.47" y1="232.60" x2="1744.47" y2="260.00" stroke="#8e8e8e" stroke-width="1.1" />
<line x1="1723.40" y1="241.73" x2="1755.00" y2="241.73" stroke="#8e8e8e" stroke-width="1.1" />
<line x1="1723.40" y1="250.87" x2="1755.00" y2="250.87" stroke="#8e8e8e" stroke-width="1.1" />
<rect x="1723.4" y="232.6" width="31.6" height="27.4" fill="none" stroke="#d2d2d2" stroke-width="1.5"/>
<line x1="1731.60" y1="233.00" x2="1731.60" y2="259.60" stroke="#6aa8f4" stroke-width="1.3" />
<line x1="1748.20" y1="233.00" x2="1748.20" y2="259.60" stroke="#6aa8f4" stroke-width="1.3" />
<line x1="1724.00" y1="239.80" x2="1754.60" y2="239.80" stroke="#6aa8f4" stroke-width="1.3" />
<line x1="1724.00" y1="251.60" x2="1754.60" y2="251.60" stroke="#6aa8f4" stroke-width="1.3" />
<text x="1767.60" y="252.10" font-family="'Liberation Sans', sans-serif" font-size="21" fill="#e6e6e6" font-weight="700" textLength="68.90" lengthAdjust="spacingAndGlyphs">Format</text>
<path d="M1852.70 243.11 L1856.70 248.09 L1860.70 243.11" fill="none" stroke="#e6e6e6" stroke-width="3.104" stroke-linecap="round" stroke-linejoin="round"/>
<path d="M1944.6 149.6 V144.6 H1921 L1933 157.2 L1921 169.8 H1944.6 V164.8" fill="none" stroke="#d0d0d0" stroke-width="2.18" stroke-linejoin="miter"/>
<path d="M1961.80 155.51 L1965.80 160.49 L1969.80 155.51" fill="none" stroke="#e6e6e6" stroke-width="3.104" stroke-linecap="round" stroke-linejoin="round"/>
<rect x="1916.80" y="188.00" width="30.40" height="25.60" fill="#222222" stroke="#cfcfcf" stroke-width="2.4"/>
<line x1="1916.80" y1="193.40" x2="1947.20" y2="193.40" stroke="#cfcfcf" stroke-width="1.68" />
<path d="M1932 196.4 V207.6 M1926.4 202.4 L1932 208 L1937.6 202.4" fill="none" stroke="#4f8fe8" stroke-width="2.35"/>
<path d="M1961.80 199.31 L1965.80 204.29 L1969.80 199.31" fill="none" stroke="#e6e6e6" stroke-width="3.104" stroke-linecap="round" stroke-linejoin="round"/>
<path d="M1935.6 230.6 L1945.6 240.4 L1928.4 258.8 L1918.6 249 Z" fill="#222222" stroke="#d9c3e6" stroke-width="1.85" stroke-linejoin="round"/>
<path d="M1925.6 241.4 L1935.4 251.2 L1928.4 258.8 L1918.6 249 Z" fill="#a846c0"/>
<path d="M1961.80 243.11 L1965.80 248.09 L1969.80 243.11" fill="none" stroke="#e6e6e6" stroke-width="3.104" stroke-linecap="round" stroke-linejoin="round"/>
<text x="1990.90" y="170.20" font-family="'Liberation Sans', sans-serif" font-size="32" fill="#4179c8" textLength="18.70" lengthAdjust="spacingAndGlyphs">A</text>
<text x="1991.40" y="198.30" font-family="'Liberation Sans', sans-serif" font-size="33" fill="#bdbdbd" textLength="17.20" lengthAdjust="spacingAndGlyphs">Z</text>
<path d="M2015.4 160.4 H2044.8 L2034.2 175 V190 H2026 V175 Z" fill="none" stroke="#c8c2b4" stroke-width="2.1" stroke-linejoin="round"/>
<path d="M2061.80 170.71 L2065.80 176.09 L2069.80 170.71" fill="none" stroke="#e6e6e6" stroke-width="3.104" stroke-linecap="round" stroke-linejoin="round"/>
<text x="1998.80" y="232.30" font-family="'Liberation Sans', sans-serif" font-size="21" fill="#e6e6e6" font-weight="700" textLength="62.70" lengthAdjust="spacingAndGlyphs">Sort &amp;</text>
<text x="2003.80" y="256.60" font-family="'Liberation Sans', sans-serif" font-size="21" fill="#e6e6e6" font-weight="700" textLength="49.60" lengthAdjust="spacingAndGlyphs">Filter</text>
<circle cx="2124" cy="165.9" r="19.8" fill="none" stroke="#b8b8b8" stroke-width="2.2"/>
<line x1="2110.00" y1="180.00" x2="2087.60" y2="202.40" stroke="#b8b8b8" stroke-width="2.44" />
<path d="M2160.90 170.71 L2164.90 176.09 L2168.90 170.71" fill="none" stroke="#e6e6e6" stroke-width="3.104" stroke-linecap="round" stroke-linejoin="round"/>
<text x="2096.00" y="232.30" font-family="'Liberation Sans', sans-serif" font-size="21" fill="#e6e6e6" font-weight="700" textLength="63.20" lengthAdjust="spacingAndGlyphs">Find &amp;</text>
<text x="2096.00" y="257.10" font-family="'Liberation Sans', sans-serif" font-size="21" fill="#e6e6e6" font-weight="700" textLength="63.20" lengthAdjust="spacingAndGlyphs">Select</text>
<path d="M2260 145.3 H2278.9 L2263.8 168.6 L2282.7 169.4 L2250 200.8 L2243 199.4 L2256.6 178.4 L2240 177.4 Z" fill="#1f5cb8" stroke="#a2c8f4" stroke-width="1.7" stroke-linejoin="round"/>
<text x="2223.10" y="232.30" font-family="'Liberation Sans', sans-serif" font-size="21" fill="#e6e6e6" font-weight="700" textLength="76.90" lengthAdjust="spacingAndGlyphs">Analyse</text>
<text x="2238.90" y="257.10" font-family="'Liberation Sans', sans-serif" font-size="21" fill="#e6e6e6" font-weight="700" textLength="45.30" lengthAdjust="spacingAndGlyphs">Data</text>
<rect x="2370.40" y="146.40" width="40.40" height="53.00" fill="#222222" stroke="#4a4a4a" stroke-width="1.8"/>
<g fill="#1b2834" stroke="#2f4d68" stroke-width="2">
<g transform="rotate(38 2391.6 178.1)"><rect x="2375.6" y="171.1" width="32" height="14" rx="7"/><rect x="2381.6" y="175.29999999999998" width="20" height="5.6" rx="2.8" fill="none"/></g>
<g transform="rotate(38 2406.2 155.5)"><rect x="2390.2" y="148.5" width="32" height="14" rx="7"/><rect x="2396.2" y="152.7" width="20" height="5.6" rx="2.8" fill="none"/></g>
</g>
<line x1="2388.00" y1="192.60" x2="2399.00" y2="192.60" stroke="#6a4a2a" stroke-width="1.6" />
<path d="M2434.91 171.47 L2439.10 176.73 L2443.29 171.47" fill="none" stroke="#8c8c8c" stroke-width="2.7159999999999997" stroke-linecap="round" stroke-linejoin="round"/>
<text x="2351.80" y="232.50" font-family="'Liberation Sans', sans-serif" font-size="21" fill="#8e8e8e" font-weight="700" textLength="102.90" lengthAdjust="spacingAndGlyphs">Sensitivity</text>
<linearGradient id="jg" x1="0.1" y1="0.9" x2="0.95" y2="0.1"><stop offset="0.1" stop-color="#4a8cf0"/><stop offset="1" stop-color="#2d68d8"/></linearGradient>
<path d="M2542.3 140.3 H2576.1 Q2578.1 140.3 2578.1 142.3 V172.9 C2569.9 172.9 2563.2 166.9 2563.2 159.4 V153.8 H2557.2 C2548.9 153.8 2542.3 147.8 2542.3 140.3 Z" fill="url(#jg)"/>
<path d="M2527.2 156.2 H2561.0 Q2563.0 156.2 2563.0 158.2 V189.4 C2554.8 189.4 2548.1 183.3 2548.1 175.6 V170.0 H2542.1 C2533.8 170.0 2527.2 163.8 2527.2 156.2 Z" fill="url(#jg)"/>
<path d="M2512.4 171.6 H2545.6 Q2547.6 171.6 2547.6 173.6 V205.3 C2539.5 205.3 2533.0 199.1 2533.0 191.3 V185.6 H2527.0 C2518.9 185.6 2512.4 179.4 2512.4 171.6 Z" fill="url(#jg)"/>
<text x="2506.50" y="232.50" font-family="'Liberation Sans', sans-serif" font-size="21" fill="#e6e6e6" font-weight="700" textLength="77.00" lengthAdjust="spacingAndGlyphs">Get Jira</text>
<text x="2521.70" y="256.40" font-family="'Liberation Sans', sans-serif" font-size="21" fill="#e6e6e6" font-weight="700" textLength="45.20" lengthAdjust="spacingAndGlyphs">Data</text>
<rect x="-30.00" y="277.60" width="2702.00" height="50.00" fill="#1f1f1f"/>
<rect x="352.20" y="282.50" width="2319.80" height="43.50" fill="#272727"/>
<text x="15.10" y="310.40" font-family="'Liberation Sans', sans-serif" font-size="24.6" fill="#f0f0f0" textLength="28.30" lengthAdjust="spacingAndGlyphs" stroke="#f0f0f0" stroke-width="0.8">A1</text>
<path d="M147.35 285.2 L154.4 297.3 H140.3 Z" fill="#cacaca"/>
<path d="M147.35 321.5 L154.4 309.4 H140.3 Z" fill="#cacaca"/>
<path d="M198 295.5 L214.8 313.3 M214.8 295.5 L198 313.3" fill="none" stroke="#585858" stroke-width="4.4"/>
<path d="M253.5 304.6 L261.6 313 L276.4 295.2" fill="none" stroke="#585858" stroke-width="4.2"/>
<text x="309.50" y="311.80" font-family="'Liberation Serif', serif" font-size="35" fill="#a6a6a6" font-style="italic" stroke="#a6a6a6" stroke-width="0.5">f</text>
<text x="322.50" y="311.80" font-family="'Liberation Serif', serif" font-size="30" fill="#a6a6a6" font-style="italic" stroke="#a6a6a6" stroke-width="0.5">x</text>
<text x="369.40" y="311.80" font-family="'Liberation Sans', sans-serif" font-size="25" fill="#f6f6f6" textLength="83.80" lengthAdjust="spacingAndGlyphs" stroke="#f6f6f6" stroke-width="0.8">zync_id</text>
<rect x="-30.00" y="327.50" width="2702.00" height="7.00" fill="#dedede"/>
<rect x="-30.00" y="334.30" width="2702.00" height="1043.90" fill="#ffffff"/>
<line x1="40.00" y1="408.80" x2="2672.00" y2="408.80" stroke="#bcbcc2" stroke-width="1.2" />
<line x1="40.00" y1="440.65" x2="2672.00" y2="440.65" stroke="#bcbcc2" stroke-width="1.2" />
<line x1="40.00" y1="472.50" x2="2672.00" y2="472.50" stroke="#bcbcc2" stroke-width="1.2" />
<line x1="40.00" y1="504.35" x2="2672.00" y2="504.35" stroke="#bcbcc2" stroke-width="1.2" />
<line x1="40.00" y1="536.20" x2="2672.00" y2="536.20" stroke="#bcbcc2" stroke-width="1.2" />
<line x1="40.00" y1="568.05" x2="2672.00" y2="568.05" stroke="#bcbcc2" stroke-width="1.2" />
<line x1="40.00" y1="599.90" x2="2672.00" y2="599.90" stroke="#bcbcc2" stroke-width="1.2" />
<line x1="40.00" y1="631.75" x2="2672.00" y2="631.75" stroke="#bcbcc2" stroke-width="1.2" />
<line x1="40.00" y1="663.60" x2="2672.00" y2="663.60" stroke="#bcbcc2" stroke-width="1.2" />
<line x1="40.00" y1="695.45" x2="2672.00" y2="695.45" stroke="#bcbcc2" stroke-width="1.2" />
<line x1="40.00" y1="727.30" x2="2672.00" y2="727.30" stroke="#bcbcc2" stroke-width="1.2" />
<line x1="40.00" y1="759.15" x2="2672.00" y2="759.15" stroke="#bcbcc2" stroke-width="1.2" />
<line x1="40.00" y1="791.00" x2="2672.00" y2="791.00" stroke="#bcbcc2" stroke-width="1.2" />
<line x1="40.00" y1="822.85" x2="2672.00" y2="822.85" stroke="#bcbcc2" stroke-width="1.2" />
<line x1="40.00" y1="854.70" x2="2672.00" y2="854.70" stroke="#bcbcc2" stroke-width="1.2" />
<line x1="40.00" y1="886.55" x2="2672.00" y2="886.55" stroke="#bcbcc2" stroke-width="1.2" />
<line x1="40.00" y1="918.40" x2="2672.00" y2="918.40" stroke="#bcbcc2" stroke-width="1.2" />
<line x1="40.00" y1="950.25" x2="2672.00" y2="950.25" stroke="#bcbcc2" stroke-width="1.2" />
<line x1="40.00" y1="982.10" x2="2672.00" y2="982.10" stroke="#bcbcc2" stroke-width="1.2" />
<line x1="40.00" y1="1013.95" x2="2672.00" y2="1013.95" stroke="#bcbcc2" stroke-width="1.2" />
<line x1="40.00" y1="1045.80" x2="2672.00" y2="1045.80" stroke="#bcbcc2" stroke-width="1.2" />
<line x1="40.00" y1="1077.65" x2="2672.00" y2="1077.65" stroke="#bcbcc2" stroke-width="1.2" />
<line x1="40.00" y1="1109.50" x2="2672.00" y2="1109.50" stroke="#bcbcc2" stroke-width="1.2" />
<line x1="40.00" y1="1141.35" x2="2672.00" y2="1141.35" stroke="#bcbcc2" stroke-width="1.2" />
<line x1="40.00" y1="1173.20" x2="2672.00" y2="1173.20" stroke="#bcbcc2" stroke-width="1.2" />
<line x1="40.00" y1="1205.05" x2="2672.00" y2="1205.05" stroke="#bcbcc2" stroke-width="1.2" />
<line x1="40.00" y1="1236.90" x2="2672.00" y2="1236.90" stroke="#bcbcc2" stroke-width="1.2" />
<line x1="40.00" y1="1268.75" x2="2672.00" y2="1268.75" stroke="#bcbcc2" stroke-width="1.2" />
<line x1="40.00" y1="1300.60" x2="2672.00" y2="1300.60" stroke="#bcbcc2" stroke-width="1.2" />
<line x1="40.00" y1="1332.45" x2="2672.00" y2="1332.45" stroke="#bcbcc2" stroke-width="1.2" />
<line x1="40.00" y1="1364.30" x2="2672.00" y2="1364.30" stroke="#bcbcc2" stroke-width="1.2" />
<line x1="444.20" y1="375.00" x2="444.20" y2="1378.20" stroke="#c6c6ca" stroke-width="1.4" />
<line x1="573.67" y1="375.00" x2="573.67" y2="1378.20" stroke="#c6c6ca" stroke-width="1.4" />
<line x1="703.14" y1="375.00" x2="703.14" y2="1378.20" stroke="#c6c6ca" stroke-width="1.4" />
<line x1="832.61" y1="375.00" x2="832.61" y2="1378.20" stroke="#c6c6ca" stroke-width="1.4" />
<line x1="962.08" y1="375.00" x2="962.08" y2="1378.20" stroke="#c6c6ca" stroke-width="1.4" />
<line x1="1091.55" y1="375.00" x2="1091.55" y2="1378.20" stroke="#c6c6ca" stroke-width="1.4" />
<line x1="1221.02" y1="375.00" x2="1221.02" y2="1378.20" stroke="#c6c6ca" stroke-width="1.4" />
<line x1="1350.49" y1="375.00" x2="1350.49" y2="1378.20" stroke="#c6c6ca" stroke-width="1.4" />
<line x1="1479.96" y1="375.00" x2="1479.96" y2="1378.20" stroke="#c6c6ca" stroke-width="1.4" />
<line x1="1609.43" y1="375.00" x2="1609.43" y2="1378.20" stroke="#c6c6ca" stroke-width="1.4" />
<line x1="1738.90" y1="375.00" x2="1738.90" y2="1378.20" stroke="#c6c6ca" stroke-width="1.4" />
<line x1="1868.37" y1="375.00" x2="1868.37" y2="1378.20" stroke="#c6c6ca" stroke-width="1.4" />
<line x1="1997.84" y1="375.00" x2="1997.84" y2="1378.20" stroke="#c6c6ca" stroke-width="1.4" />
<line x1="2127.31" y1="375.00" x2="2127.31" y2="1378.20" stroke="#c6c6ca" stroke-width="1.4" />
<line x1="2256.78" y1="375.00" x2="2256.78" y2="1378.20" stroke="#c6c6ca" stroke-width="1.4" />
<line x1="2386.25" y1="375.00" x2="2386.25" y2="1378.20" stroke="#c6c6ca" stroke-width="1.4" />
<line x1="2515.72" y1="375.00" x2="2515.72" y2="1378.20" stroke="#c6c6ca" stroke-width="1.4" />
<line x1="2645.19" y1="375.00" x2="2675.19" y2="1378.20" stroke="#c6c6ca" stroke-width="1.4" />
<rect x="-30.00" y="334.30" width="2702.00" height="40.70" fill="#0b0b0b"/>
<rect x="41.30" y="334.30" width="402.90" height="40.70" fill="#4d4d4d"/>
<line x1="573.67" y1="334.30" x2="573.67" y2="375.00" stroke="#505050" stroke-width="1.6" />
<line x1="703.14" y1="334.30" x2="703.14" y2="375.00" stroke="#505050" stroke-width="1.6" />
<line x1="832.61" y1="334.30" x2="832.61" y2="375.00" stroke="#505050" stroke-width="1.6" />
<line x1="962.08" y1="334.30" x2="962.08" y2="375.00" stroke="#505050" stroke-width="1.6" />
<line x1="1091.55" y1="334.30" x2="1091.55" y2="375.00" stroke="#505050" stroke-width="1.6" />
<line x1="1221.02" y1="334.30" x2="1221.02" y2="375.00" stroke="#505050" stroke-width="1.6" />
<line x1="1350.49" y1="334.30" x2="1350.49" y2="375.00" stroke="#505050" stroke-width="1.6" />
<line x1="1479.96" y1="334.30" x2="1479.96" y2="375.00" stroke="#505050" stroke-width="1.6" />
<line x1="1609.43" y1="334.30" x2="1609.43" y2="375.00" stroke="#505050" stroke-width="1.6" />
<line x1="1738.90" y1="334.30" x2="1738.90" y2="375.00" stroke="#505050" stroke-width="1.6" />
<line x1="1868.37" y1="334.30" x2="1868.37" y2="375.00" stroke="#505050" stroke-width="1.6" />
<line x1="1997.84" y1="334.30" x2="1997.84" y2="375.00" stroke="#505050" stroke-width="1.6" />
<line x1="2127.31" y1="334.30" x2="2127.31" y2="375.00" stroke="#505050" stroke-width="1.6" />
<line x1="2256.78" y1="334.30" x2="2256.78" y2="375.00" stroke="#505050" stroke-width="1.6" />
<line x1="2386.25" y1="334.30" x2="2386.25" y2="375.00" stroke="#505050" stroke-width="1.6" />
<line x1="2515.72" y1="334.30" x2="2515.72" y2="375.00" stroke="#505050" stroke-width="1.6" />
<line x1="2645.19" y1="334.30" x2="2675.19" y2="375.00" stroke="#505050" stroke-width="1.6" />
<line x1="444.20" y1="334.30" x2="444.20" y2="375.00" stroke="#2a2a2a" stroke-width="1.2" />
<text x="235.31" y="364.00" font-family="'Liberation Sans', sans-serif" font-size="20.6" fill="#ececec" font-weight="700" textLength="13.58" lengthAdjust="spacingAndGlyphs">A</text>
<text x="502.65" y="364.00" font-family="'Liberation Sans', sans-serif" font-size="20.6" fill="#ececec" font-weight="700" textLength="12.56" lengthAdjust="spacingAndGlyphs">B</text>
<text x="632.48" y="364.00" font-family="'Liberation Sans', sans-serif" font-size="20.6" fill="#ececec" font-weight="700" textLength="11.86" lengthAdjust="spacingAndGlyphs">C</text>
<text x="760.81" y="364.00" font-family="'Liberation Sans', sans-serif" font-size="20.6" fill="#ececec" font-weight="700" textLength="14.12" lengthAdjust="spacingAndGlyphs">D</text>
<text x="891.88" y="364.00" font-family="'Liberation Sans', sans-serif" font-size="20.6" fill="#ececec" font-weight="700" textLength="10.94" lengthAdjust="spacingAndGlyphs">E</text>
<text x="1021.67" y="364.00" font-family="'Liberation Sans', sans-serif" font-size="20.6" fill="#ececec" font-weight="700" textLength="10.28" lengthAdjust="spacingAndGlyphs">F</text>
<text x="1149.14" y="364.00" font-family="'Liberation Sans', sans-serif" font-size="20.6" fill="#ececec" font-weight="700" textLength="14.28" lengthAdjust="spacingAndGlyphs">G</text>
<text x="1278.68" y="364.00" font-family="'Liberation Sans', sans-serif" font-size="20.6" fill="#ececec" font-weight="700" textLength="14.14" lengthAdjust="spacingAndGlyphs">H</text>
<text x="1412.23" y="364.00" font-family="'Liberation Sans', sans-serif" font-size="20.6" fill="#ececec" font-weight="700" textLength="5.98" lengthAdjust="spacingAndGlyphs">I</text>
<text x="1540.98" y="364.00" font-family="'Liberation Sans', sans-serif" font-size="20.6" fill="#ececec" font-weight="700" textLength="7.42" lengthAdjust="spacingAndGlyphs">J</text>
<text x="1668.04" y="364.00" font-family="'Liberation Sans', sans-serif" font-size="20.6" fill="#ececec" font-weight="700" textLength="12.25" lengthAdjust="spacingAndGlyphs">K</text>
<text x="1798.90" y="364.00" font-family="'Liberation Sans', sans-serif" font-size="20.6" fill="#ececec" font-weight="700" textLength="9.47" lengthAdjust="spacingAndGlyphs">L</text>
<text x="1923.32" y="364.00" font-family="'Liberation Sans', sans-serif" font-size="20.6" fill="#ececec" font-weight="700" textLength="19.58" lengthAdjust="spacingAndGlyphs">M</text>
<text x="2055.20" y="364.00" font-family="'Liberation Sans', sans-serif" font-size="20.6" fill="#ececec" font-weight="700" textLength="14.75" lengthAdjust="spacingAndGlyphs">N</text>
<text x="2184.47" y="364.00" font-family="'Liberation Sans', sans-serif" font-size="20.6" fill="#ececec" font-weight="700" textLength="15.16" lengthAdjust="spacingAndGlyphs">O</text>
<text x="2315.55" y="364.00" font-family="'Liberation Sans', sans-serif" font-size="20.6" fill="#ececec" font-weight="700" textLength="11.92" lengthAdjust="spacingAndGlyphs">P</text>
<text x="2443.30" y="364.00" font-family="'Liberation Sans', sans-serif" font-size="20.6" fill="#ececec" font-weight="700" textLength="15.38" lengthAdjust="spacingAndGlyphs">Q</text>
<text x="2574.15" y="364.00" font-family="'Liberation Sans', sans-serif" font-size="20.6" fill="#ececec" font-weight="700" textLength="12.61" lengthAdjust="spacingAndGlyphs">R</text>
<rect x="-30.00" y="375.00" width="68.60" height="1003.20" fill="#0b0b0b"/>
<rect x="38.60" y="334.30" width="2.40" height="42.70" fill="#cfcfcf"/>
<rect x="38.60" y="377.00" width="1.60" height="1003.20" fill="#8a8a8a" opacity="0.55"/>
<path d="M34 343.5 L34 371.3 L5.6 371.3 Z" fill="#4c4c4c"/>
<rect x="-30.00" y="374.70" width="68.60" height="2.60" fill="#8e8e8e"/>
<rect x="-30.00" y="377.55" width="68.60" height="31.25" fill="#4d4d4d"/>
<line x1="-30.00" y1="408.80" x2="38.60" y2="408.80" stroke="#3a3a3a" stroke-width="1.4" />
<line x1="-30.00" y1="440.65" x2="38.60" y2="440.65" stroke="#3a3a3a" stroke-width="1.4" />
<line x1="-30.00" y1="472.50" x2="38.60" y2="472.50" stroke="#3a3a3a" stroke-width="1.4" />
<line x1="-30.00" y1="504.35" x2="38.60" y2="504.35" stroke="#3a3a3a" stroke-width="1.4" />
<line x1="-30.00" y1="536.20" x2="38.60" y2="536.20" stroke="#3a3a3a" stroke-width="1.4" />
<line x1="-30.00" y1="568.05" x2="38.60" y2="568.05" stroke="#3a3a3a" stroke-width="1.4" />
<line x1="-30.00" y1="599.90" x2="38.60" y2="599.90" stroke="#3a3a3a" stroke-width="1.4" />
<line x1="-30.00" y1="631.75" x2="38.60" y2="631.75" stroke="#3a3a3a" stroke-width="1.4" />
<line x1="-30.00" y1="663.60" x2="38.60" y2="663.60" stroke="#3a3a3a" stroke-width="1.4" />
<line x1="-30.00" y1="695.45" x2="38.60" y2="695.45" stroke="#3a3a3a" stroke-width="1.4" />
<line x1="-30.00" y1="727.30" x2="38.60" y2="727.30" stroke="#3a3a3a" stroke-width="1.4" />
<line x1="-30.00" y1="759.15" x2="38.60" y2="759.15" stroke="#3a3a3a" stroke-width="1.4" />
<line x1="-30.00" y1="791.00" x2="38.60" y2="791.00" stroke="#3a3a3a" stroke-width="1.4" />
<line x1="-30.00" y1="822.85" x2="38.60" y2="822.85" stroke="#3a3a3a" stroke-width="1.4" />
<line x1="-30.00" y1="854.70" x2="38.60" y2="854.70" stroke="#3a3a3a" stroke-width="1.4" />
<line x1="-30.00" y1="886.55" x2="38.60" y2="886.55" stroke="#3a3a3a" stroke-width="1.4" />
<line x1="-30.00" y1="918.40" x2="38.60" y2="918.40" stroke="#3a3a3a" stroke-width="1.4" />
<line x1="-30.00" y1="950.25" x2="38.60" y2="950.25" stroke="#3a3a3a" stroke-width="1.4" />
<line x1="-30.00" y1="982.10" x2="38.60" y2="982.10" stroke="#3a3a3a" stroke-width="1.4" />
<line x1="-30.00" y1="1013.95" x2="38.60" y2="1013.95" stroke="#3a3a3a" stroke-width="1.4" />
<line x1="-30.00" y1="1045.80" x2="38.60" y2="1045.80" stroke="#3a3a3a" stroke-width="1.4" />
<line x1="-30.00" y1="1077.65" x2="38.60" y2="1077.65" stroke="#3a3a3a" stroke-width="1.4" />
<line x1="-30.00" y1="1109.50" x2="38.60" y2="1109.50" stroke="#3a3a3a" stroke-width="1.4" />
<line x1="-30.00" y1="1141.35" x2="38.60" y2="1141.35" stroke="#3a3a3a" stroke-width="1.4" />
<line x1="-30.00" y1="1173.20" x2="38.60" y2="1173.20" stroke="#3a3a3a" stroke-width="1.4" />
<line x1="-30.00" y1="1205.05" x2="38.60" y2="1205.05" stroke="#3a3a3a" stroke-width="1.4" />
<line x1="-30.00" y1="1236.90" x2="38.60" y2="1236.90" stroke="#3a3a3a" stroke-width="1.4" />
<line x1="-30.00" y1="1268.75" x2="38.60" y2="1268.75" stroke="#3a3a3a" stroke-width="1.4" />
<line x1="-30.00" y1="1300.60" x2="38.60" y2="1300.60" stroke="#3a3a3a" stroke-width="1.4" />
<line x1="-30.00" y1="1332.45" x2="38.60" y2="1332.45" stroke="#3a3a3a" stroke-width="1.4" />
<line x1="-30.00" y1="1364.30" x2="38.60" y2="1364.30" stroke="#3a3a3a" stroke-width="1.4" />
<clipPath id="cg"><rect x="0" y="330" width="2642" height="1048.20"/></clipPath>
<g clip-path="url(#cg)">
<text x="11.62" y="401.40" font-family="'Liberation Sans', sans-serif" font-size="20.6" fill="#f2f2f2" font-weight="700" textLength="11.36" lengthAdjust="spacingAndGlyphs">1</text>
<text x="11.62" y="433.25" font-family="'Liberation Sans', sans-serif" font-size="20.6" fill="#f2f2f2" font-weight="700" textLength="11.36" lengthAdjust="spacingAndGlyphs">2</text>
<text x="11.62" y="465.10" font-family="'Liberation Sans', sans-serif" font-size="20.6" fill="#f2f2f2" font-weight="700" textLength="11.36" lengthAdjust="spacingAndGlyphs">3</text>
<text x="11.62" y="496.95" font-family="'Liberation Sans', sans-serif" font-size="20.6" fill="#f2f2f2" font-weight="700" textLength="11.36" lengthAdjust="spacingAndGlyphs">4</text>
<text x="11.62" y="528.80" font-family="'Liberation Sans', sans-serif" font-size="20.6" fill="#f2f2f2" font-weight="700" textLength="11.36" lengthAdjust="spacingAndGlyphs">5</text>
<text x="11.62" y="560.65" font-family="'Liberation Sans', sans-serif" font-size="20.6" fill="#f2f2f2" font-weight="700" textLength="11.36" lengthAdjust="spacingAndGlyphs">6</text>
<text x="11.62" y="592.50" font-family="'Liberation Sans', sans-serif" font-size="20.6" fill="#f2f2f2" font-weight="700" textLength="11.36" lengthAdjust="spacingAndGlyphs">7</text>
<text x="11.62" y="624.35" font-family="'Liberation Sans', sans-serif" font-size="20.6" fill="#f2f2f2" font-weight="700" textLength="11.36" lengthAdjust="spacingAndGlyphs">8</text>
<text x="11.62" y="656.20" font-family="'Liberation Sans', sans-serif" font-size="20.6" fill="#f2f2f2" font-weight="700" textLength="11.36" lengthAdjust="spacingAndGlyphs">9</text>
<text x="5.95" y="688.05" font-family="'Liberation Sans', sans-serif" font-size="20.6" fill="#f2f2f2" font-weight="700" textLength="22.70" lengthAdjust="spacingAndGlyphs">10</text>
<text x="5.95" y="719.90" font-family="'Liberation Sans', sans-serif" font-size="20.6" fill="#f2f2f2" font-weight="700" textLength="22.70" lengthAdjust="spacingAndGlyphs">11</text>
<text x="5.95" y="751.75" font-family="'Liberation Sans', sans-serif" font-size="20.6" fill="#f2f2f2" font-weight="700" textLength="22.70" lengthAdjust="spacingAndGlyphs">12</text>
<text x="5.95" y="783.60" font-family="'Liberation Sans', sans-serif" font-size="20.6" fill="#f2f2f2" font-weight="700" textLength="22.70" lengthAdjust="spacingAndGlyphs">13</text>
<text x="5.95" y="815.45" font-family="'Liberation Sans', sans-serif" font-size="20.6" fill="#f2f2f2" font-weight="700" textLength="22.70" lengthAdjust="spacingAndGlyphs">14</text>
<text x="5.95" y="847.30" font-family="'Liberation Sans', sans-serif" font-size="20.6" fill="#f2f2f2" font-weight="700" textLength="22.70" lengthAdjust="spacingAndGlyphs">15</text>
<text x="5.95" y="879.15" font-family="'Liberation Sans', sans-serif" font-size="20.6" fill="#f2f2f2" font-weight="700" textLength="22.70" lengthAdjust="spacingAndGlyphs">16</text>
<text x="5.95" y="911.00" font-family="'Liberation Sans', sans-serif" font-size="20.6" fill="#f2f2f2" font-weight="700" textLength="22.70" lengthAdjust="spacingAndGlyphs">17</text>
<text x="5.95" y="942.85" font-family="'Liberation Sans', sans-serif" font-size="20.6" fill="#f2f2f2" font-weight="700" textLength="22.70" lengthAdjust="spacingAndGlyphs">18</text>
<text x="5.95" y="974.70" font-family="'Liberation Sans', sans-serif" font-size="20.6" fill="#f2f2f2" font-weight="700" textLength="22.70" lengthAdjust="spacingAndGlyphs">19</text>
<text x="5.95" y="1006.55" font-family="'Liberation Sans', sans-serif" font-size="20.6" fill="#f2f2f2" font-weight="700" textLength="22.70" lengthAdjust="spacingAndGlyphs">20</text>
<text x="5.95" y="1038.40" font-family="'Liberation Sans', sans-serif" font-size="20.6" fill="#f2f2f2" font-weight="700" textLength="22.70" lengthAdjust="spacingAndGlyphs">21</text>
<text x="5.95" y="1070.25" font-family="'Liberation Sans', sans-serif" font-size="20.6" fill="#f2f2f2" font-weight="700" textLength="22.70" lengthAdjust="spacingAndGlyphs">22</text>
<text x="5.95" y="1102.10" font-family="'Liberation Sans', sans-serif" font-size="20.6" fill="#f2f2f2" font-weight="700" textLength="22.70" lengthAdjust="spacingAndGlyphs">23</text>
<text x="5.95" y="1133.95" font-family="'Liberation Sans', sans-serif" font-size="20.6" fill="#f2f2f2" font-weight="700" textLength="22.70" lengthAdjust="spacingAndGlyphs">24</text>
<text x="5.95" y="1165.80" font-family="'Liberation Sans', sans-serif" font-size="20.6" fill="#f2f2f2" font-weight="700" textLength="22.70" lengthAdjust="spacingAndGlyphs">25</text>
<text x="5.95" y="1197.65" font-family="'Liberation Sans', sans-serif" font-size="20.6" fill="#f2f2f2" font-weight="700" textLength="22.70" lengthAdjust="spacingAndGlyphs">26</text>
<text x="5.95" y="1229.50" font-family="'Liberation Sans', sans-serif" font-size="20.6" fill="#f2f2f2" font-weight="700" textLength="22.70" lengthAdjust="spacingAndGlyphs">27</text>
<text x="5.95" y="1261.35" font-family="'Liberation Sans', sans-serif" font-size="20.6" fill="#f2f2f2" font-weight="700" textLength="22.70" lengthAdjust="spacingAndGlyphs">28</text>
<text x="5.95" y="1293.20" font-family="'Liberation Sans', sans-serif" font-size="20.6" fill="#f2f2f2" font-weight="700" textLength="22.70" lengthAdjust="spacingAndGlyphs">29</text>
<text x="5.95" y="1325.05" font-family="'Liberation Sans', sans-serif" font-size="20.6" fill="#f2f2f2" font-weight="700" textLength="22.70" lengthAdjust="spacingAndGlyphs">30</text>
<text x="5.95" y="1356.90" font-family="'Liberation Sans', sans-serif" font-size="20.6" fill="#f2f2f2" font-weight="700" textLength="22.70" lengthAdjust="spacingAndGlyphs">31</text>
<text x="5.95" y="1388.75" font-family="'Liberation Sans', sans-serif" font-size="20.6" fill="#f2f2f2" font-weight="700" textLength="22.70" lengthAdjust="spacingAndGlyphs">32</text>
</g>
<clipPath id="c0"><rect x="41.00" y="376.95" width="402.00" height="1001.25"/></clipPath>
<g clip-path="url(#c0)">
<text x="45.00" y="401.60" font-family="'Liberation Sans', sans-serif" font-size="21.9" fill="#000000" textLength="72.78" lengthAdjust="spacingAndGlyphs" stroke="#000000" stroke-width="0.45">zync_id</text>
<text x="45.00" y="433.45" font-family="'Liberation Sans', sans-serif" font-size="21.9" fill="#000000" textLength="405.97" lengthAdjust="spacingAndGlyphs" stroke="#000000" stroke-width="0.45">ced0bd32-f377-4b86-a3b7-3eefd1a556d9</text>
<text x="45.00" y="465.30" font-family="'Liberation Sans', sans-serif" font-size="21.9" fill="#000000" textLength="412.05" lengthAdjust="spacingAndGlyphs" stroke="#000000" stroke-width="0.45">9dd9ed41-1dc7-4d48-b8b3-49f75bc97937</text>
<text x="45.00" y="497.15" font-family="'Liberation Sans', sans-serif" font-size="21.9" fill="#000000" textLength="412.66" lengthAdjust="spacingAndGlyphs" stroke="#000000" stroke-width="0.45">c4d49864-3aa7-451a-a90e-e739653a0d31</text>
<text x="45.00" y="529.00" font-family="'Liberation Sans', sans-serif" font-size="21.9" fill="#000000" textLength="406.72" lengthAdjust="spacingAndGlyphs" stroke="#000000" stroke-width="0.45">75c9ecdd-26d5-4824-b55f-5a376589e2c2</text>
<text x="45.00" y="560.85" font-family="'Liberation Sans', sans-serif" font-size="21.9" fill="#000000" textLength="407.69" lengthAdjust="spacingAndGlyphs" stroke="#000000" stroke-width="0.45">45f1b77f-3816-4b59-bde0-508143d2dc57</text>
<text x="45.00" y="592.70" font-family="'Liberation Sans', sans-serif" font-size="21.9" fill="#000000" textLength="401.75" lengthAdjust="spacingAndGlyphs" stroke="#000000" stroke-width="0.45">6ca1b749-c36f-4725-bc0b-d4253e64fd75</text>
<text x="45.00" y="624.55" font-family="'Liberation Sans', sans-serif" font-size="21.9" fill="#000000" textLength="405.00" lengthAdjust="spacingAndGlyphs" stroke="#000000" stroke-width="0.45">147d9e3f-07bb-42c3-9448-90a93b029fa6</text>
<text x="45.00" y="656.40" font-family="'Liberation Sans', sans-serif" font-size="21.9" fill="#000000" textLength="405.41" lengthAdjust="spacingAndGlyphs" stroke="#000000" stroke-width="0.45">247694aa-bd41-4539-a2cf-6456ac0ae324</text>
<text x="45.00" y="688.25" font-family="'Liberation Sans', sans-serif" font-size="21.9" fill="#000000" textLength="412.28" lengthAdjust="spacingAndGlyphs" stroke="#000000" stroke-width="0.45">1ef8eb5b-b16d-4aed-b7eb-8a20486dd47c</text>
<text x="45.00" y="720.10" font-family="'Liberation Sans', sans-serif" font-size="21.9" fill="#000000" textLength="398.59" lengthAdjust="spacingAndGlyphs" stroke="#000000" stroke-width="0.45">8ec230ec-74ff-4aaa-aee1-7846b6d0aa82</text>
<text x="45.00" y="751.95" font-family="'Liberation Sans', sans-serif" font-size="21.9" fill="#000000" textLength="404.88" lengthAdjust="spacingAndGlyphs" stroke="#000000" stroke-width="0.45">218c63af-11d1-4bbd-8f6e-095cb3d96109</text>
<text x="45.00" y="783.80" font-family="'Liberation Sans', sans-serif" font-size="21.9" fill="#000000" textLength="397.08" lengthAdjust="spacingAndGlyphs" stroke="#000000" stroke-width="0.45">ccd0df14-2aef-4d6e-b52c-62ad049f35d7</text>
<text x="45.00" y="815.65" font-family="'Liberation Sans', sans-serif" font-size="21.9" fill="#000000" textLength="406.94" lengthAdjust="spacingAndGlyphs" stroke="#000000" stroke-width="0.45">5e1be724-c17b-4c25-812f-5c951b755284</text>
<text x="45.00" y="847.50" font-family="'Liberation Sans', sans-serif" font-size="21.9" fill="#000000" textLength="394.92" lengthAdjust="spacingAndGlyphs" stroke="#000000" stroke-width="0.45">3efb84c3-069a-4fd8-9af4-95263b0f5081</text>
<text x="45.00" y="879.35" font-family="'Liberation Sans', sans-serif" font-size="21.9" fill="#000000" textLength="409.89" lengthAdjust="spacingAndGlyphs" stroke="#000000" stroke-width="0.45">08431f89-ae9d-46cc-9c0d-ffe18433c97c:1</text>
<text x="45.00" y="911.20" font-family="'Liberation Sans', sans-serif" font-size="21.9" fill="#000000" textLength="402.17" lengthAdjust="spacingAndGlyphs" stroke="#000000" stroke-width="0.45">fd7e03e7-9d6d-4c5d-a4ea-f9bba1aa7bc5</text>
<text x="45.00" y="943.05" font-family="'Liberation Sans', sans-serif" font-size="21.9" fill="#000000" textLength="404.58" lengthAdjust="spacingAndGlyphs" stroke="#000000" stroke-width="0.45">4ca1f5db-1d9d-4d04-92a0-68f6616633c2</text>
<text x="45.00" y="974.90" font-family="'Liberation Sans', sans-serif" font-size="21.9" fill="#000000" textLength="405.03" lengthAdjust="spacingAndGlyphs" stroke="#000000" stroke-width="0.45">39545029-4ce1-457f-b2e8-70f72712664e</text>
<text x="45.00" y="1006.75" font-family="'Liberation Sans', sans-serif" font-size="21.9" fill="#000000" textLength="401.81" lengthAdjust="spacingAndGlyphs" stroke="#000000" stroke-width="0.45">fbd4bfe1-e8f9-4e8e-a345-27fefa8c5f06:1</text>
<text x="45.00" y="1038.60" font-family="'Liberation Sans', sans-serif" font-size="21.9" fill="#000000" textLength="407.91" lengthAdjust="spacingAndGlyphs" stroke="#000000" stroke-width="0.45">59a5d56b-1053-4bcc-98ba-5921af2e4ba9</text>
</g>
<clipPath id="c1"><rect x="445.20" y="376.95" width="127.27" height="1001.25"/></clipPath>
<g clip-path="url(#c1)">
<text x="449.20" y="401.60" font-family="'Liberation Sans', sans-serif" font-size="21.9" fill="#000000" textLength="67.98" lengthAdjust="spacingAndGlyphs" stroke="#000000" stroke-width="0.45">agency</text>
<text x="449.20" y="433.45" font-family="'Liberation Sans', sans-serif" font-size="21.9" fill="#000000" textLength="64.36" lengthAdjust="spacingAndGlyphs" stroke="#000000" stroke-width="0.45">parent</text>
<text x="449.20" y="465.30" font-family="'Liberation Sans', sans-serif" font-size="21.9" fill="#000000" textLength="64.36" lengthAdjust="spacingAndGlyphs" stroke="#000000" stroke-width="0.45">parent</text>
<text x="449.20" y="497.15" font-family="'Liberation Sans', sans-serif" font-size="21.9" fill="#000000" textLength="64.36" lengthAdjust="spacingAndGlyphs" stroke="#000000" stroke-width="0.45">parent</text>
<text x="449.20" y="529.00" font-family="'Liberation Sans', sans-serif" font-size="21.9" fill="#000000" textLength="64.36" lengthAdjust="spacingAndGlyphs" stroke="#000000" stroke-width="0.45">parent</text>
<text x="449.20" y="560.85" font-family="'Liberation Sans', sans-serif" font-size="21.9" fill="#000000" textLength="64.36" lengthAdjust="spacingAndGlyphs" stroke="#000000" stroke-width="0.45">parent</text>
<text x="449.20" y="592.70" font-family="'Liberation Sans', sans-serif" font-size="21.9" fill="#000000" textLength="64.36" lengthAdjust="spacingAndGlyphs" stroke="#000000" stroke-width="0.45">parent</text>
<text x="449.20" y="624.55" font-family="'Liberation Sans', sans-serif" font-size="21.9" fill="#000000" textLength="64.36" lengthAdjust="spacingAndGlyphs" stroke="#000000" stroke-width="0.45">parent</text>
<text x="449.20" y="656.40" font-family="'Liberation Sans', sans-serif" font-size="21.9" fill="#000000" textLength="64.36" lengthAdjust="spacingAndGlyphs" stroke="#000000" stroke-width="0.45">parent</text>
<text x="449.20" y="688.25" font-family="'Liberation Sans', sans-serif" font-size="21.9" fill="#000000" textLength="64.36" lengthAdjust="spacingAndGlyphs" stroke="#000000" stroke-width="0.45">parent</text>
<text x="449.20" y="720.10" font-family="'Liberation Sans', sans-serif" font-size="21.9" fill="#000000" textLength="64.36" lengthAdjust="spacingAndGlyphs" stroke="#000000" stroke-width="0.45">parent</text>
<text x="449.20" y="751.95" font-family="'Liberation Sans', sans-serif" font-size="21.9" fill="#000000" textLength="64.36" lengthAdjust="spacingAndGlyphs" stroke="#000000" stroke-width="0.45">parent</text>
<text x="449.20" y="783.80" font-family="'Liberation Sans', sans-serif" font-size="21.9" fill="#000000" textLength="64.36" lengthAdjust="spacingAndGlyphs" stroke="#000000" stroke-width="0.45">parent</text>
<text x="449.20" y="815.65" font-family="'Liberation Sans', sans-serif" font-size="21.9" fill="#000000" textLength="64.36" lengthAdjust="spacingAndGlyphs" stroke="#000000" stroke-width="0.45">parent</text>
<text x="449.20" y="847.50" font-family="'Liberation Sans', sans-serif" font-size="21.9" fill="#000000" textLength="64.36" lengthAdjust="spacingAndGlyphs" stroke="#000000" stroke-width="0.45">parent</text>
<text x="449.20" y="879.35" font-family="'Liberation Sans', sans-serif" font-size="21.9" fill="#000000" textLength="64.36" lengthAdjust="spacingAndGlyphs" stroke="#000000" stroke-width="0.45">parent</text>
<text x="449.20" y="911.20" font-family="'Liberation Sans', sans-serif" font-size="21.9" fill="#000000" textLength="64.36" lengthAdjust="spacingAndGlyphs" stroke="#000000" stroke-width="0.45">parent</text>
<text x="449.20" y="943.05" font-family="'Liberation Sans', sans-serif" font-size="21.9" fill="#000000" textLength="64.36" lengthAdjust="spacingAndGlyphs" stroke="#000000" stroke-width="0.45">parent</text>
<text x="449.20" y="974.90" font-family="'Liberation Sans', sans-serif" font-size="21.9" fill="#000000" textLength="64.36" lengthAdjust="spacingAndGlyphs" stroke="#000000" stroke-width="0.45">parent</text>
<text x="449.20" y="1006.75" font-family="'Liberation Sans', sans-serif" font-size="21.9" fill="#000000" textLength="64.36" lengthAdjust="spacingAndGlyphs" stroke="#000000" stroke-width="0.45">parent</text>
<text x="449.20" y="1038.60" font-family="'Liberation Sans', sans-serif" font-size="21.9" fill="#000000" textLength="64.36" lengthAdjust="spacingAndGlyphs" stroke="#000000" stroke-width="0.45">parent</text>
</g>
<clipPath id="c2"><rect x="574.67" y="376.95" width="127.27" height="1001.25"/></clipPath>
<g clip-path="url(#c2)">
<text x="578.67" y="401.60" font-family="'Liberation Sans', sans-serif" font-size="21.9" fill="#000000" textLength="79.59" lengthAdjust="spacingAndGlyphs" stroke="#000000" stroke-width="0.45">browser</text>
<text x="578.67" y="433.45" font-family="'Liberation Sans', sans-serif" font-size="21.9" fill="#000000" textLength="122.41" lengthAdjust="spacingAndGlyphs" stroke="#000000" stroke-width="0.45">Mozilla/5.0 (</text>
<text x="578.67" y="465.30" font-family="'Liberation Sans', sans-serif" font-size="21.9" fill="#000000" textLength="122.41" lengthAdjust="spacingAndGlyphs" stroke="#000000" stroke-width="0.45">Mozilla/5.0 (</text>
<text x="578.67" y="497.15" font-family="'Liberation Sans', sans-serif" font-size="21.9" fill="#000000" textLength="122.41" lengthAdjust="spacingAndGlyphs" stroke="#000000" stroke-width="0.45">Mozilla/5.0 (</text>
<text x="578.67" y="529.00" font-family="'Liberation Sans', sans-serif" font-size="21.9" fill="#000000" textLength="122.41" lengthAdjust="spacingAndGlyphs" stroke="#000000" stroke-width="0.45">Mozilla/5.0 (</text>
<text x="578.67" y="560.85" font-family="'Liberation Sans', sans-serif" font-size="21.9" fill="#000000" textLength="122.41" lengthAdjust="spacingAndGlyphs" stroke="#000000" stroke-width="0.45">Mozilla/5.0 (</text>
<text x="578.67" y="592.70" font-family="'Liberation Sans', sans-serif" font-size="21.9" fill="#000000" textLength="122.41" lengthAdjust="spacingAndGlyphs" stroke="#000000" stroke-width="0.45">Mozilla/5.0 (</text>
<text x="578.67" y="624.55" font-family="'Liberation Sans', sans-serif" font-size="21.9" fill="#000000" textLength="122.41" lengthAdjust="spacingAndGlyphs" stroke="#000000" stroke-width="0.45">Mozilla/5.0 (</text>
<text x="578.67" y="656.40" font-family="'Liberation Sans', sans-serif" font-size="21.9" fill="#000000" textLength="122.41" lengthAdjust="spacingAndGlyphs" stroke="#000000" stroke-width="0.45">Mozilla/5.0 (</text>
<text x="578.67" y="688.25" font-family="'Liberation Sans', sans-serif" font-size="21.9" fill="#000000" textLength="124.66" lengthAdjust="spacingAndGlyphs" stroke="#000000" stroke-width="0.45">Opera/8.92.(</text>
<text x="578.67" y="720.10" font-family="'Liberation Sans', sans-serif" font-size="21.9" fill="#000000" textLength="122.41" lengthAdjust="spacingAndGlyphs" stroke="#000000" stroke-width="0.45">Mozilla/5.0 (</text>
<text x="578.67" y="751.95" font-family="'Liberation Sans', sans-serif" font-size="21.9" fill="#000000" textLength="122.41" lengthAdjust="spacingAndGlyphs" stroke="#000000" stroke-width="0.45">Mozilla/5.0 (</text>
<text x="578.67" y="783.80" font-family="'Liberation Sans', sans-serif" font-size="21.9" fill="#000000" textLength="122.41" lengthAdjust="spacingAndGlyphs" stroke="#000000" stroke-width="0.45">Mozilla/5.0 (</text>
<text x="578.67" y="815.65" font-family="'Liberation Sans', sans-serif" font-size="21.9" fill="#000000" textLength="122.41" lengthAdjust="spacingAndGlyphs" stroke="#000000" stroke-width="0.45">Mozilla/5.0 (</text>
<text x="578.67" y="847.50" font-family="'Liberation Sans', sans-serif" font-size="21.9" fill="#000000" textLength="122.41" lengthAdjust="spacingAndGlyphs" stroke="#000000" stroke-width="0.45">Mozilla/5.0 (</text>
<text x="578.67" y="879.35" font-family="'Liberation Sans', sans-serif" font-size="21.9" fill="#000000" textLength="122.41" lengthAdjust="spacingAndGlyphs" stroke="#000000" stroke-width="0.45">Mozilla/5.0 (</text>
<text x="578.67" y="911.20" font-family="'Liberation Sans', sans-serif" font-size="21.9" fill="#000000" textLength="122.41" lengthAdjust="spacingAndGlyphs" stroke="#000000" stroke-width="0.45">Mozilla/5.0 (</text>
<text x="578.67" y="943.05" font-family="'Liberation Sans', sans-serif" font-size="21.9" fill="#000000" textLength="122.41" lengthAdjust="spacingAndGlyphs" stroke="#000000" stroke-width="0.45">Mozilla/5.0 (</text>
<text x="578.67" y="974.90" font-family="'Liberation Sans', sans-serif" font-size="21.9" fill="#000000" textLength="122.41" lengthAdjust="spacingAndGlyphs" stroke="#000000" stroke-width="0.45">Mozilla/5.0 (</text>
<text x="578.67" y="1006.75" font-family="'Liberation Sans', sans-serif" font-size="21.9" fill="#000000" textLength="122.41" lengthAdjust="spacingAndGlyphs" stroke="#000000" stroke-width="0.45">Mozilla/5.0 (</text>
<text x="578.67" y="1038.60" font-family="'Liberation Sans', sans-serif" font-size="21.9" fill="#000000" textLength="122.41" lengthAdjust="spacingAndGlyphs" stroke="#000000" stroke-width="0.45">Mozilla/5.0 (</text>
</g>
<clipPath id="c3"><rect x="704.14" y="376.95" width="127.27" height="1001.25"/></clipPath>
<g clip-path="url(#c3)">
<text x="708.14" y="401.60" font-family="'Liberation Sans', sans-serif" font-size="21.9" fill="#000000" textLength="83.23" lengthAdjust="spacingAndGlyphs" stroke="#000000" stroke-width="0.45">business</text>
<text x="708.14" y="433.45" font-family="'Liberation Sans', sans-serif" font-size="21.9" fill="#000000" textLength="87.97" lengthAdjust="spacingAndGlyphs" stroke="#000000" stroke-width="0.45">solutions</text>
<text x="708.14" y="465.30" font-family="'Liberation Sans', sans-serif" font-size="21.9" fill="#000000" textLength="65.61" lengthAdjust="spacingAndGlyphs" stroke="#000000" stroke-width="0.45">vortals</text>
<text x="708.14" y="497.15" font-family="'Liberation Sans', sans-serif" font-size="21.9" fill="#000000" textLength="90.27" lengthAdjust="spacingAndGlyphs" stroke="#000000" stroke-width="0.45">networks</text>
<text x="708.14" y="529.00" font-family="'Liberation Sans', sans-serif" font-size="21.9" fill="#000000" textLength="71.09" lengthAdjust="spacingAndGlyphs" stroke="#000000" stroke-width="0.45">models</text>
<text x="708.14" y="560.85" font-family="'Liberation Sans', sans-serif" font-size="21.9" fill="#000000" textLength="62.05" lengthAdjust="spacingAndGlyphs" stroke="#000000" stroke-width="0.45">niches</text>
<text x="708.14" y="592.70" font-family="'Liberation Sans', sans-serif" font-size="21.9" fill="#000000" textLength="92.92" lengthAdjust="spacingAndGlyphs" stroke="#000000" stroke-width="0.45">platforms</text>
<text x="708.14" y="624.55" font-family="'Liberation Sans', sans-serif" font-size="21.9" fill="#000000" textLength="123.73" lengthAdjust="spacingAndGlyphs" stroke="#000000" stroke-width="0.45">technologies</text>
<text x="708.14" y="656.40" font-family="'Liberation Sans', sans-serif" font-size="21.9" fill="#000000" textLength="92.92" lengthAdjust="spacingAndGlyphs" stroke="#000000" stroke-width="0.45">platforms</text>
<text x="708.14" y="688.25" font-family="'Liberation Sans', sans-serif" font-size="21.9" fill="#000000" textLength="138.19" lengthAdjust="spacingAndGlyphs" stroke="#000000" stroke-width="0.45">functionalities</text>
<text x="708.14" y="720.10" font-family="'Liberation Sans', sans-serif" font-size="21.9" fill="#000000" textLength="101.19" lengthAdjust="spacingAndGlyphs" stroke="#000000" stroke-width="0.45">paradigms</text>
<text x="708.14" y="751.95" font-family="'Liberation Sans', sans-serif" font-size="21.9" fill="#000000" textLength="101.19" lengthAdjust="spacingAndGlyphs" stroke="#000000" stroke-width="0.45">paradigms</text>
<text x="708.14" y="783.80" font-family="'Liberation Sans', sans-serif" font-size="21.9" fill="#000000" textLength="101.19" lengthAdjust="spacingAndGlyphs" stroke="#000000" stroke-width="0.45">paradigms</text>
<text x="708.14" y="815.65" font-family="'Liberation Sans', sans-serif" font-size="21.9" fill="#000000" textLength="101.19" lengthAdjust="spacingAndGlyphs" stroke="#000000" stroke-width="0.45">paradigms</text>
<text x="708.14" y="847.50" font-family="'Liberation Sans', sans-serif" font-size="21.9" fill="#000000" textLength="101.19" lengthAdjust="spacingAndGlyphs" stroke="#000000" stroke-width="0.45">paradigms</text>
<text x="708.14" y="879.35" font-family="'Liberation Sans', sans-serif" font-size="21.9" fill="#000000" textLength="101.19" lengthAdjust="spacingAndGlyphs" stroke="#000000" stroke-width="0.45">paradigms</text>
<text x="708.14" y="911.20" font-family="'Liberation Sans', sans-serif" font-size="21.9" fill="#000000" textLength="101.19" lengthAdjust="spacingAndGlyphs" stroke="#000000" stroke-width="0.45">paradigms</text>
<text x="708.14" y="943.05" font-family="'Liberation Sans', sans-serif" font-size="21.9" fill="#000000" textLength="101.19" lengthAdjust="spacingAndGlyphs" stroke="#000000" stroke-width="0.45">paradigms</text>
<text x="708.14" y="974.90" font-family="'Liberation Sans', sans-serif" font-size="21.9" fill="#000000" textLength="101.19" lengthAdjust="spacingAndGlyphs" stroke="#000000" stroke-width="0.45">paradigms</text>
<text x="708.14" y="1006.75" font-family="'Liberation Sans', sans-serif" font-size="21.9" fill="#000000" textLength="101.19" lengthAdjust="spacingAndGlyphs" stroke="#000000" stroke-width="0.45">paradigms</text>
<text x="708.14" y="1038.60" font-family="'Liberation Sans', sans-serif" font-size="21.9" fill="#000000" textLength="101.19" lengthAdjust="spacingAndGlyphs" stroke="#000000" stroke-width="0.45">paradigms</text>
</g>
<clipPath id="c4"><rect x="833.61" y="376.95" width="127.27" height="1001.25"/></clipPath>
<g clip-path="url(#c4)">
<text x="837.61" y="401.60" font-family="'Liberation Sans', sans-serif" font-size="21.9" fill="#000000" textLength="79.58" lengthAdjust="spacingAndGlyphs" stroke="#000000" stroke-width="0.45">blm_tag</text>
<text x="837.61" y="433.45" font-family="'Liberation Sans', sans-serif" font-size="21.9" fill="#000000" textLength="151.56" lengthAdjust="spacingAndGlyphs" stroke="#000000" stroke-width="0.45">['RPG', 'WWW']</text>
<text x="837.61" y="465.30" font-family="'Liberation Sans', sans-serif" font-size="21.9" fill="#000000" textLength="119.88" lengthAdjust="spacingAndGlyphs" stroke="#000000" stroke-width="0.45">['TXN', 'RPG'</text>
<text x="837.61" y="497.15" font-family="'Liberation Sans', sans-serif" font-size="21.9" fill="#000000" textLength="150.64" lengthAdjust="spacingAndGlyphs" stroke="#000000" stroke-width="0.45">['WWW', 'TXN']</text>
<text x="837.61" y="529.00" font-family="'Liberation Sans', sans-serif" font-size="21.9" fill="#000000" textLength="119.19" lengthAdjust="spacingAndGlyphs" stroke="#000000" stroke-width="0.45">['AXN', 'GST'</text>
<text x="837.61" y="560.85" font-family="'Liberation Sans', sans-serif" font-size="21.9" fill="#000000" textLength="115.06" lengthAdjust="spacingAndGlyphs" stroke="#000000" stroke-width="0.45">['GST', 'GST'</text>
<text x="837.61" y="592.70" font-family="'Liberation Sans', sans-serif" font-size="21.9" fill="#000000" textLength="120.80" lengthAdjust="spacingAndGlyphs" stroke="#000000" stroke-width="0.45">['RPG', 'RPG'</text>
<text x="837.61" y="624.55" font-family="'Liberation Sans', sans-serif" font-size="21.9" fill="#000000" textLength="117.94" lengthAdjust="spacingAndGlyphs" stroke="#000000" stroke-width="0.45">['GST', 'RPG'</text>
<text x="837.61" y="656.40" font-family="'Liberation Sans', sans-serif" font-size="21.9" fill="#000000" textLength="151.56" lengthAdjust="spacingAndGlyphs" stroke="#000000" stroke-width="0.45">['RPG', 'WWW']</text>
<text x="837.61" y="688.25" font-family="'Liberation Sans', sans-serif" font-size="21.9" fill="#000000" textLength="119.88" lengthAdjust="spacingAndGlyphs" stroke="#000000" stroke-width="0.45">['TXN', 'RPG'</text>
<text x="837.61" y="720.10" font-family="'Liberation Sans', sans-serif" font-size="21.9" fill="#000000" textLength="148.69" lengthAdjust="spacingAndGlyphs" stroke="#000000" stroke-width="0.45">['GST', 'WWW']</text>
<text x="837.61" y="751.95" font-family="'Liberation Sans', sans-serif" font-size="21.9" fill="#000000" textLength="148.69" lengthAdjust="spacingAndGlyphs" stroke="#000000" stroke-width="0.45">['GST', 'WWW']</text>
<text x="837.61" y="783.80" font-family="'Liberation Sans', sans-serif" font-size="21.9" fill="#000000" textLength="148.69" lengthAdjust="spacingAndGlyphs" stroke="#000000" stroke-width="0.45">['GST', 'WWW']</text>
<text x="837.61" y="815.65" font-family="'Liberation Sans', sans-serif" font-size="21.9" fill="#000000" textLength="148.69" lengthAdjust="spacingAndGlyphs" stroke="#000000" stroke-width="0.45">['GST', 'WWW']</text>
<text x="837.61" y="847.50" font-family="'Liberation Sans', sans-serif" font-size="21.9" fill="#000000" textLength="148.69" lengthAdjust="spacingAndGlyphs" stroke="#000000" stroke-width="0.45">['GST', 'WWW']</text>
<text x="837.61" y="879.35" font-family="'Liberation Sans', sans-serif" font-size="21.9" fill="#000000" textLength="148.69" lengthAdjust="spacingAndGlyphs" stroke="#000000" stroke-width="0.45">['GST', 'WWW']</text>
<text x="837.61" y="911.20" font-family="'Liberation Sans', sans-serif" font-size="21.9" fill="#000000" textLength="148.69" lengthAdjust="spacingAndGlyphs" stroke="#000000" stroke-width="0.45">['GST', 'WWW']</text>
<text x="837.61" y="943.05" font-family="'Liberation Sans', sans-serif" font-size="21.9" fill="#000000" textLength="148.69" lengthAdjust="spacingAndGlyphs" stroke="#000000" stroke-width="0.45">['GST', 'WWW']</text>
<text x="837.61" y="974.90" font-family="'Liberation Sans', sans-serif" font-size="21.9" fill="#000000" textLength="148.69" lengthAdjust="spacingAndGlyphs" stroke="#000000" stroke-width="0.45">['GST', 'WWW']</text>
<text x="837.61" y="1006.75" font-family="'Liberation Sans', sans-serif" font-size="21.9" fill="#000000" textLength="148.69" lengthAdjust="spacingAndGlyphs" stroke="#000000" stroke-width="0.45">['GST', 'WWW']</text>
<text x="837.61" y="1038.60" font-family="'Liberation Sans', sans-serif" font-size="21.9" fill="#000000" textLength="148.69" lengthAdjust="spacingAndGlyphs" stroke="#000000" stroke-width="0.45">['GST', 'WWW']</text>
</g>
<clipPath id="c5"><rect x="963.08" y="376.95" width="127.27" height="1001.25"/></clipPath>
<g clip-path="url(#c5)">
<text x="967.08" y="401.60" font-family="'Liberation Sans', sans-serif" font-size="21.9" fill="#000000" textLength="64.12" lengthAdjust="spacingAndGlyphs" stroke="#000000" stroke-width="0.45">cohort</text>
<text x="1038.72" y="433.45" font-family="'Liberation Sans', sans-serif" font-size="21.9" fill="#000000" textLength="48.53" lengthAdjust="spacingAndGlyphs" stroke="#000000" stroke-width="0.45">1979</text>
<text x="1038.72" y="465.30" font-family="'Liberation Sans', sans-serif" font-size="21.9" fill="#000000" textLength="48.53" lengthAdjust="spacingAndGlyphs" stroke="#000000" stroke-width="0.45">2015</text>
<text x="1038.72" y="497.15" font-family="'Liberation Sans', sans-serif" font-size="21.9" fill="#000000" textLength="48.53" lengthAdjust="spacingAndGlyphs" stroke="#000000" stroke-width="0.45">1997</text>
<text x="1038.72" y="529.00" font-family="'Liberation Sans', sans-serif" font-size="21.9" fill="#000000" textLength="48.53" lengthAdjust="spacingAndGlyphs" stroke="#000000" stroke-width="0.45">1996</text>
<text x="1038.72" y="560.85" font-family="'Liberation Sans', sans-serif" font-size="21.9" fill="#000000" textLength="48.53" lengthAdjust="spacingAndGlyphs" stroke="#000000" stroke-width="0.45">2021</text>
<text x="1038.72" y="592.70" font-family="'Liberation Sans', sans-serif" font-size="21.9" fill="#000000" textLength="48.53" lengthAdjust="spacingAndGlyphs" stroke="#000000" stroke-width="0.45">2001</text>
<text x="1038.72" y="624.55" font-family="'Liberation Sans', sans-serif" font-size="21.9" fill="#000000" textLength="48.53" lengthAdjust="spacingAndGlyphs" stroke="#000000" stroke-width="0.45">2004</text>
<text x="1038.72" y="656.40" font-family="'Liberation Sans', sans-serif" font-size="21.9" fill="#000000" textLength="48.53" lengthAdjust="spacingAndGlyphs" stroke="#000000" stroke-width="0.45">1993</text>
<text x="1038.72" y="688.25" font-family="'Liberation Sans', sans-serif" font-size="21.9" fill="#000000" textLength="48.53" lengthAdjust="spacingAndGlyphs" stroke="#000000" stroke-width="0.45">1972</text>
<text x="1038.72" y="720.10" font-family="'Liberation Sans', sans-serif" font-size="21.9" fill="#000000" textLength="48.53" lengthAdjust="spacingAndGlyphs" stroke="#000000" stroke-width="0.45">2000</text>
<text x="1038.72" y="751.95" font-family="'Liberation Sans', sans-serif" font-size="21.9" fill="#000000" textLength="48.53" lengthAdjust="spacingAndGlyphs" stroke="#000000" stroke-width="0.45">2000</text>
<text x="1038.72" y="783.80" font-family="'Liberation Sans', sans-serif" font-size="21.9" fill="#000000" textLength="48.53" lengthAdjust="spacingAndGlyphs" stroke="#000000" stroke-width="0.45">2000</text>
<text x="1038.72" y="815.65" font-family="'Liberation Sans', sans-serif" font-size="21.9" fill="#000000" textLength="48.53" lengthAdjust="spacingAndGlyphs" stroke="#000000" stroke-width="0.45">2000</text>
<text x="1038.72" y="847.50" font-family="'Liberation Sans', sans-serif" font-size="21.9" fill="#000000" textLength="48.53" lengthAdjust="spacingAndGlyphs" stroke="#000000" stroke-width="0.45">2000</text>
<text x="1038.72" y="879.35" font-family="'Liberation Sans', sans-serif" font-size="21.9" fill="#000000" textLength="48.53" lengthAdjust="spacingAndGlyphs" stroke="#000000" stroke-width="0.45">2000</text>
<text x="1038.72" y="911.20" font-family="'Liberation Sans', sans-serif" font-size="21.9" fill="#000000" textLength="48.53" lengthAdjust="spacingAndGlyphs" stroke="#000000" stroke-width="0.45">2000</text>
<text x="1038.72" y="943.05" font-family="'Liberation Sans', sans-serif" font-size="21.9" fill="#000000" textLength="48.53" lengthAdjust="spacingAndGlyphs" stroke="#000000" stroke-width="0.45">2000</text>
<text x="1038.72" y="974.90" font-family="'Liberation Sans', sans-serif" font-size="21.9" fill="#000000" textLength="48.53" lengthAdjust="spacingAndGlyphs" stroke="#000000" stroke-width="0.45">2000</text>
<text x="1038.72" y="1006.75" font-family="'Liberation Sans', sans-serif" font-size="21.9" fill="#000000" textLength="48.53" lengthAdjust="spacingAndGlyphs" stroke="#000000" stroke-width="0.45">2000</text>
<text x="1038.72" y="1038.60" font-family="'Liberation Sans', sans-serif" font-size="21.9" fill="#000000" textLength="48.53" lengthAdjust="spacingAndGlyphs" stroke="#000000" stroke-width="0.45">2000</text>
</g>
<clipPath id="c6"><rect x="1092.55" y="376.95" width="127.27" height="1001.25"/></clipPath>
<g clip-path="url(#c6)">
<text x="1096.55" y="401.60" font-family="'Liberation Sans', sans-serif" font-size="21.9" fill="#000000" textLength="83.88" lengthAdjust="spacingAndGlyphs" stroke="#000000" stroke-width="0.45">category</text>
<text x="1096.55" y="433.45" font-family="'Liberation Sans', sans-serif" font-size="21.9" fill="#000000" textLength="150.55" lengthAdjust="spacingAndGlyphs" stroke="#000000" stroke-width="0.45">object-oriented</text>
<text x="1096.55" y="465.30" font-family="'Liberation Sans', sans-serif" font-size="21.9" fill="#000000" textLength="91.52" lengthAdjust="spacingAndGlyphs" stroke="#000000" stroke-width="0.45">impactful</text>
<text x="1096.55" y="497.15" font-family="'Liberation Sans', sans-serif" font-size="21.9" fill="#000000" textLength="121.47" lengthAdjust="spacingAndGlyphs" stroke="#000000" stroke-width="0.45">client-driven</text>
<text x="1096.55" y="529.00" font-family="'Liberation Sans', sans-serif" font-size="21.9" fill="#000000" textLength="45.00" lengthAdjust="spacingAndGlyphs" stroke="#000000" stroke-width="0.45">local</text>
<text x="1096.55" y="560.85" font-family="'Liberation Sans', sans-serif" font-size="21.9" fill="#000000" textLength="82.22" lengthAdjust="spacingAndGlyphs" stroke="#000000" stroke-width="0.45">modular</text>
<text x="1096.55" y="592.70" font-family="'Liberation Sans', sans-serif" font-size="21.9" fill="#000000" textLength="116.22" lengthAdjust="spacingAndGlyphs" stroke="#000000" stroke-width="0.45">incremental</text>
<text x="1096.55" y="624.55" font-family="'Liberation Sans', sans-serif" font-size="21.9" fill="#000000" textLength="128.50" lengthAdjust="spacingAndGlyphs" stroke="#000000" stroke-width="0.45">fault-tolerant</text>
<text x="1096.55" y="656.40" font-family="'Liberation Sans', sans-serif" font-size="21.9" fill="#000000" textLength="84.39" lengthAdjust="spacingAndGlyphs" stroke="#000000" stroke-width="0.45">cohesive</text>
<text x="1096.55" y="688.25" font-family="'Liberation Sans', sans-serif" font-size="21.9" fill="#000000" textLength="101.41" lengthAdjust="spacingAndGlyphs" stroke="#000000" stroke-width="0.45">composite</text>
<text x="1096.55" y="720.10" font-family="'Liberation Sans', sans-serif" font-size="21.9" fill="#000000" textLength="109.78" lengthAdjust="spacingAndGlyphs" stroke="#000000" stroke-width="0.45">zero-defect</text>
<text x="1096.55" y="751.95" font-family="'Liberation Sans', sans-serif" font-size="21.9" fill="#000000" textLength="109.78" lengthAdjust="spacingAndGlyphs" stroke="#000000" stroke-width="0.45">zero-defect</text>
<text x="1096.55" y="783.80" font-family="'Liberation Sans', sans-serif" font-size="21.9" fill="#000000" textLength="109.78" lengthAdjust="spacingAndGlyphs" stroke="#000000" stroke-width="0.45">zero-defect</text>
<text x="1096.55" y="815.65" font-family="'Liberation Sans', sans-serif" font-size="21.9" fill="#000000" textLength="109.78" lengthAdjust="spacingAndGlyphs" stroke="#000000" stroke-width="0.45">zero-defect</text>
<text x="1096.55" y="847.50" font-family="'Liberation Sans', sans-serif" font-size="21.9" fill="#000000" textLength="109.78" lengthAdjust="spacingAndGlyphs" stroke="#000000" stroke-width="0.45">zero-defect</text>
<text x="1096.55" y="879.35" font-family="'Liberation Sans', sans-serif" font-size="21.9" fill="#000000" textLength="109.78" lengthAdjust="spacingAndGlyphs" stroke="#000000" stroke-width="0.45">zero-defect</text>
<text x="1096.55" y="911.20" font-family="'Liberation Sans', sans-serif" font-size="21.9" fill="#000000" textLength="109.78" lengthAdjust="spacingAndGlyphs" stroke="#000000" stroke-width="0.45">zero-defect</text>
<text x="1096.55" y="943.05" font-family="'Liberation Sans', sans-serif" font-size="21.9" fill="#000000" textLength="109.78" lengthAdjust="spacingAndGlyphs" stroke="#000000" stroke-width="0.45">zero-defect</text>
<text x="1096.55" y="974.90" font-family="'Liberation Sans', sans-serif" font-size="21.9" fill="#000000" textLength="109.78" lengthAdjust="spacingAndGlyphs" stroke="#000000" stroke-width="0.45">zero-defect</text>
<text x="1096.55" y="1006.75" font-family="'Liberation Sans', sans-serif" font-size="21.9" fill="#000000" textLength="109.78" lengthAdjust="spacingAndGlyphs" stroke="#000000" stroke-width="0.45">zero-defect</text>
<text x="1096.55" y="1038.60" font-family="'Liberation Sans', sans-serif" font-size="21.9" fill="#000000" textLength="109.78" lengthAdjust="spacingAndGlyphs" stroke="#000000" stroke-width="0.45">zero-defect</text>
</g>
<clipPath id="c7"><rect x="1222.02" y="376.95" width="127.27" height="1001.25"/></clipPath>
<g clip-path="url(#c7)">
<text x="1226.02" y="401.60" font-family="'Liberation Sans', sans-serif" font-size="21.9" fill="#000000" textLength="121.17" lengthAdjust="spacingAndGlyphs" stroke="#000000" stroke-width="0.45">engagement</text>
<text x="1334.05" y="433.45" font-family="'Liberation Sans', sans-serif" font-size="21.9" fill="#000000" textLength="12.14" lengthAdjust="spacingAndGlyphs" stroke="#000000" stroke-width="0.45">8</text>
<text x="1321.92" y="465.30" font-family="'Liberation Sans', sans-serif" font-size="21.9" fill="#000000" textLength="24.27" lengthAdjust="spacingAndGlyphs" stroke="#000000" stroke-width="0.45">75</text>
<text x="1321.92" y="497.15" font-family="'Liberation Sans', sans-serif" font-size="21.9" fill="#000000" textLength="24.27" lengthAdjust="spacingAndGlyphs" stroke="#000000" stroke-width="0.45">84</text>
<text x="1321.92" y="529.00" font-family="'Liberation Sans', sans-serif" font-size="21.9" fill="#000000" textLength="24.27" lengthAdjust="spacingAndGlyphs" stroke="#000000" stroke-width="0.45">72</text>
<text x="1321.92" y="560.85" font-family="'Liberation Sans', sans-serif" font-size="21.9" fill="#000000" textLength="24.27" lengthAdjust="spacingAndGlyphs" stroke="#000000" stroke-width="0.45">65</text>
<text x="1321.92" y="592.70" font-family="'Liberation Sans', sans-serif" font-size="21.9" fill="#000000" textLength="24.27" lengthAdjust="spacingAndGlyphs" stroke="#000000" stroke-width="0.45">81</text>
<text x="1321.92" y="624.55" font-family="'Liberation Sans', sans-serif" font-size="21.9" fill="#000000" textLength="24.27" lengthAdjust="spacingAndGlyphs" stroke="#000000" stroke-width="0.45">57</text>
<text x="1321.92" y="656.40" font-family="'Liberation Sans', sans-serif" font-size="21.9" fill="#000000" textLength="24.27" lengthAdjust="spacingAndGlyphs" stroke="#000000" stroke-width="0.45">17</text>
<text x="1321.92" y="688.25" font-family="'Liberation Sans', sans-serif" font-size="21.9" fill="#000000" textLength="24.27" lengthAdjust="spacingAndGlyphs" stroke="#000000" stroke-width="0.45">60</text>
<text x="1334.05" y="720.10" font-family="'Liberation Sans', sans-serif" font-size="21.9" fill="#000000" textLength="12.14" lengthAdjust="spacingAndGlyphs" stroke="#000000" stroke-width="0.45">5</text>
<text x="1334.05" y="751.95" font-family="'Liberation Sans', sans-serif" font-size="21.9" fill="#000000" textLength="12.14" lengthAdjust="spacingAndGlyphs" stroke="#000000" stroke-width="0.45">5</text>
<text x="1334.05" y="783.80" font-family="'Liberation Sans', sans-serif" font-size="21.9" fill="#000000" textLength="12.14" lengthAdjust="spacingAndGlyphs" stroke="#000000" stroke-width="0.45">5</text>
<text x="1334.05" y="815.65" font-family="'Liberation Sans', sans-serif" font-size="21.9" fill="#000000" textLength="12.14" lengthAdjust="spacingAndGlyphs" stroke="#000000" stroke-width="0.45">5</text>
<text x="1334.05" y="847.50" font-family="'Liberation Sans', sans-serif" font-size="21.9" fill="#000000" textLength="12.14" lengthAdjust="spacingAndGlyphs" stroke="#000000" stroke-width="0.45">5</text>
<text x="1334.05" y="879.35" font-family="'Liberation Sans', sans-serif" font-size="21.9" fill="#000000" textLength="12.14" lengthAdjust="spacingAndGlyphs" stroke="#000000" stroke-width="0.45">5</text>
<text x="1334.05" y="911.20" font-family="'Liberation Sans', sans-serif" font-size="21.9" fill="#000000" textLength="12.14" lengthAdjust="spacingAndGlyphs" stroke="#000000" stroke-width="0.45">5</text>
<text x="1334.05" y="943.05" font-family="'Liberation Sans', sans-serif" font-size="21.9" fill="#000000" textLength="12.14" lengthAdjust="spacingAndGlyphs" stroke="#000000" stroke-width="0.45">5</text>
<text x="1334.05" y="974.90" font-family="'Liberation Sans', sans-serif" font-size="21.9" fill="#000000" textLength="12.14" lengthAdjust="spacingAndGlyphs" stroke="#000000" stroke-width="0.45">5</text>
<text x="1334.05" y="1006.75" font-family="'Liberation Sans', sans-serif" font-size="21.9" fill="#000000" textLength="12.14" lengthAdjust="spacingAndGlyphs" stroke="#000000" stroke-width="0.45">5</text>
<text x="1334.05" y="1038.60" font-family="'Liberation Sans', sans-serif" font-size="21.9" fill="#000000" textLength="12.14" lengthAdjust="spacingAndGlyphs" stroke="#000000" stroke-width="0.45">5</text>
</g>
<clipPath id="c8"><rect x="1351.49" y="376.95" width="127.27" height="1001.25"/></clipPath>
<g clip-path="url(#c8)">
<text x="1355.49" y="401.60" font-family="'Liberation Sans', sans-serif" font-size="21.9" fill="#000000" textLength="164.05" lengthAdjust="spacingAndGlyphs" stroke="#000000" stroke-width="0.45">marketing_reach</text>
<text x="1378.60" y="433.45" font-family="'Liberation Sans', sans-serif" font-size="21.9" fill="#000000" textLength="97.06" lengthAdjust="spacingAndGlyphs" stroke="#000000" stroke-width="0.45">37146535</text>
<text x="1378.60" y="465.30" font-family="'Liberation Sans', sans-serif" font-size="21.9" fill="#000000" textLength="97.06" lengthAdjust="spacingAndGlyphs" stroke="#000000" stroke-width="0.45">51701260</text>
<text x="1378.60" y="497.15" font-family="'Liberation Sans', sans-serif" font-size="21.9" fill="#000000" textLength="97.06" lengthAdjust="spacingAndGlyphs" stroke="#000000" stroke-width="0.45">36755189</text>
<text x="1378.60" y="529.00" font-family="'Liberation Sans', sans-serif" font-size="21.9" fill="#000000" textLength="97.06" lengthAdjust="spacingAndGlyphs" stroke="#000000" stroke-width="0.45">19984971</text>
<text x="1378.60" y="560.85" font-family="'Liberation Sans', sans-serif" font-size="21.9" fill="#000000" textLength="97.06" lengthAdjust="spacingAndGlyphs" stroke="#000000" stroke-width="0.45">82630454</text>
<text x="1378.60" y="592.70" font-family="'Liberation Sans', sans-serif" font-size="21.9" fill="#000000" textLength="97.06" lengthAdjust="spacingAndGlyphs" stroke="#000000" stroke-width="0.45">21196645</text>
<text x="1378.60" y="624.55" font-family="'Liberation Sans', sans-serif" font-size="21.9" fill="#000000" textLength="97.06" lengthAdjust="spacingAndGlyphs" stroke="#000000" stroke-width="0.45">46512093</text>
<text x="1378.60" y="656.40" font-family="'Liberation Sans', sans-serif" font-size="21.9" fill="#000000" textLength="97.06" lengthAdjust="spacingAndGlyphs" stroke="#000000" stroke-width="0.45">84186249</text>
<text x="1378.60" y="688.25" font-family="'Liberation Sans', sans-serif" font-size="21.9" fill="#000000" textLength="97.06" lengthAdjust="spacingAndGlyphs" stroke="#000000" stroke-width="0.45">37621773</text>
<text x="1390.72" y="720.10" font-family="'Liberation Sans', sans-serif" font-size="21.9" fill="#000000" textLength="84.94" lengthAdjust="spacingAndGlyphs" stroke="#000000" stroke-width="0.45">4759980</text>
<text x="1390.72" y="751.95" font-family="'Liberation Sans', sans-serif" font-size="21.9" fill="#000000" textLength="84.94" lengthAdjust="spacingAndGlyphs" stroke="#000000" stroke-width="0.45">4759980</text>
<text x="1390.72" y="783.80" font-family="'Liberation Sans', sans-serif" font-size="21.9" fill="#000000" textLength="84.94" lengthAdjust="spacingAndGlyphs" stroke="#000000" stroke-width="0.45">4759980</text>
<text x="1390.72" y="815.65" font-family="'Liberation Sans', sans-serif" font-size="21.9" fill="#000000" textLength="84.94" lengthAdjust="spacingAndGlyphs" stroke="#000000" stroke-width="0.45">4759980</text>
<text x="1390.72" y="847.50" font-family="'Liberation Sans', sans-serif" font-size="21.9" fill="#000000" textLength="84.94" lengthAdjust="spacingAndGlyphs" stroke="#000000" stroke-width="0.45">4759980</text>
<text x="1390.72" y="879.35" font-family="'Liberation Sans', sans-serif" font-size="21.9" fill="#000000" textLength="84.94" lengthAdjust="spacingAndGlyphs" stroke="#000000" stroke-width="0.45">4759980</text>
<text x="1390.72" y="911.20" font-family="'Liberation Sans', sans-serif" font-size="21.9" fill="#000000" textLength="84.94" lengthAdjust="spacingAndGlyphs" stroke="#000000" stroke-width="0.45">4759980</text>
<text x="1390.72" y="943.05" font-family="'Liberation Sans', sans-serif" font-size="21.9" fill="#000000" textLength="84.94" lengthAdjust="spacingAndGlyphs" stroke="#000000" stroke-width="0.45">4759980</text>
<text x="1390.72" y="974.90" font-family="'Liberation Sans', sans-serif" font-size="21.9" fill="#000000" textLength="84.94" lengthAdjust="spacingAndGlyphs" stroke="#000000" stroke-width="0.45">4759980</text>
<text x="1390.72" y="1006.75" font-family="'Liberation Sans', sans-serif" font-size="21.9" fill="#000000" textLength="84.94" lengthAdjust="spacingAndGlyphs" stroke="#000000" stroke-width="0.45">4759980</text>
<text x="1390.72" y="1038.60" font-family="'Liberation Sans', sans-serif" font-size="21.9" fill="#000000" textLength="84.94" lengthAdjust="spacingAndGlyphs" stroke="#000000" stroke-width="0.45">4759980</text>
</g>
<clipPath id="c9"><rect x="1480.96" y="376.95" width="127.27" height="1001.25"/></clipPath>
<g clip-path="url(#c9)">
<text x="1484.96" y="401.60" font-family="'Liberation Sans', sans-serif" font-size="21.9" fill="#000000" textLength="69.94" lengthAdjust="spacingAndGlyphs" stroke="#000000" stroke-width="0.45">section</text>
<text x="1592.99" y="433.45" font-family="'Liberation Sans', sans-serif" font-size="21.9" fill="#000000" textLength="12.14" lengthAdjust="spacingAndGlyphs" stroke="#000000" stroke-width="0.45">2</text>
<text x="1592.99" y="465.30" font-family="'Liberation Sans', sans-serif" font-size="21.9" fill="#000000" textLength="12.14" lengthAdjust="spacingAndGlyphs" stroke="#000000" stroke-width="0.45">0</text>
<text x="1592.99" y="497.15" font-family="'Liberation Sans', sans-serif" font-size="21.9" fill="#000000" textLength="12.14" lengthAdjust="spacingAndGlyphs" stroke="#000000" stroke-width="0.45">1</text>
<text x="1592.99" y="529.00" font-family="'Liberation Sans', sans-serif" font-size="21.9" fill="#000000" textLength="12.14" lengthAdjust="spacingAndGlyphs" stroke="#000000" stroke-width="0.45">8</text>
<text x="1592.99" y="560.85" font-family="'Liberation Sans', sans-serif" font-size="21.9" fill="#000000" textLength="12.14" lengthAdjust="spacingAndGlyphs" stroke="#000000" stroke-width="0.45">5</text>
<text x="1592.99" y="592.70" font-family="'Liberation Sans', sans-serif" font-size="21.9" fill="#000000" textLength="12.14" lengthAdjust="spacingAndGlyphs" stroke="#000000" stroke-width="0.45">1</text>
<text x="1592.99" y="624.55" font-family="'Liberation Sans', sans-serif" font-size="21.9" fill="#000000" textLength="12.14" lengthAdjust="spacingAndGlyphs" stroke="#000000" stroke-width="0.45">6</text>
<text x="1592.99" y="656.40" font-family="'Liberation Sans', sans-serif" font-size="21.9" fill="#000000" textLength="12.14" lengthAdjust="spacingAndGlyphs" stroke="#000000" stroke-width="0.45">0</text>
<text x="1592.99" y="688.25" font-family="'Liberation Sans', sans-serif" font-size="21.9" fill="#000000" textLength="12.14" lengthAdjust="spacingAndGlyphs" stroke="#000000" stroke-width="0.45">7</text>
<text x="1592.99" y="720.10" font-family="'Liberation Sans', sans-serif" font-size="21.9" fill="#000000" textLength="12.14" lengthAdjust="spacingAndGlyphs" stroke="#000000" stroke-width="0.45">5</text>
<text x="1592.99" y="751.95" font-family="'Liberation Sans', sans-serif" font-size="21.9" fill="#000000" textLength="12.14" lengthAdjust="spacingAndGlyphs" stroke="#000000" stroke-width="0.45">5</text>
<text x="1592.99" y="783.80" font-family="'Liberation Sans', sans-serif" font-size="21.9" fill="#000000" textLength="12.14" lengthAdjust="spacingAndGlyphs" stroke="#000000" stroke-width="0.45">5</text>
<text x="1592.99" y="815.65" font-family="'Liberation Sans', sans-serif" font-size="21.9" fill="#000000" textLength="12.14" lengthAdjust="spacingAndGlyphs" stroke="#000000" stroke-width="0.45">5</text>
<text x="1592.99" y="847.50" font-family="'Liberation Sans', sans-serif" font-size="21.9" fill="#000000" textLength="12.14" lengthAdjust="spacingAndGlyphs" stroke="#000000" stroke-width="0.45">5</text>
<text x="1592.99" y="879.35" font-family="'Liberation Sans', sans-serif" font-size="21.9" fill="#000000" textLength="12.14" lengthAdjust="spacingAndGlyphs" stroke="#000000" stroke-width="0.45">5</text>
<text x="1592.99" y="911.20" font-family="'Liberation Sans', sans-serif" font-size="21.9" fill="#000000" textLength="12.14" lengthAdjust="spacingAndGlyphs" stroke="#000000" stroke-width="0.45">5</text>
<text x="1592.99" y="943.05" font-family="'Liberation Sans', sans-serif" font-size="21.9" fill="#000000" textLength="12.14" lengthAdjust="spacingAndGlyphs" stroke="#000000" stroke-width="0.45">5</text>
<text x="1592.99" y="974.90" font-family="'Liberation Sans', sans-serif" font-size="21.9" fill="#000000" textLength="12.14" lengthAdjust="spacingAndGlyphs" stroke="#000000" stroke-width="0.45">5</text>
<text x="1592.99" y="1006.75" font-family="'Liberation Sans', sans-serif" font-size="21.9" fill="#000000" textLength="12.14" lengthAdjust="spacingAndGlyphs" stroke="#000000" stroke-width="0.45">5</text>
<text x="1592.99" y="1038.60" font-family="'Liberation Sans', sans-serif" font-size="21.9" fill="#000000" textLength="12.14" lengthAdjust="spacingAndGlyphs" stroke="#000000" stroke-width="0.45">5</text>
</g>
<rect x="40.30" y="373.35" width="405.40" height="4.20" fill="#3f5d51"/>
<rect x="38.60" y="375.95" width="3.60" height="34.25" fill="#215c3e"/>
<rect x="442.30" y="374.35" width="3.80" height="28.85" fill="#1a5c3a"/>
<rect x="38.80" y="407.30" width="399.80" height="4.20" fill="#124426"/>
<rect x="439.60" y="404.40" width="8.40" height="8.40" fill="#ffffff"/>
<rect x="440.60" y="405.40" width="7.60" height="7.60" fill="#245c42"/>
<g transform="translate(203.2 392.2) scale(1.17 1.02)">
<path d="M9.5 28.5 C6 24 2.5 19.5 1 17.5 C-0.5 15.5 1.5 13.2 4 14.6 L7.6 17.6 L5.2 6.2 C4.6 3.4 8 2.4 8.9 5 L11.3 12 L10.8 2.6 C10.7 0 14.4 -0.3 14.8 2.4 L16 11.6 L17.4 3.4 C17.9 0.9 21.4 1.4 21.2 4 L20.6 12.6 L23.2 7.4 C24.4 5.2 27.4 6.4 26.7 8.9 C25.6 13 24.8 17 24 20.5 C23.3 23.6 22 26 20.6 28.5 Z" fill="#f6f6f6" stroke="#4e4e4e" stroke-width="2.3" stroke-linejoin="round"/>
<line x1="12.20" y1="17.50" x2="12.20" y2="23.50" stroke="#8a8a8a" stroke-width="1.3" />
<line x1="15.40" y1="17.50" x2="15.40" y2="23.50" stroke="#8a8a8a" stroke-width="1.3" />
<line x1="18.60" y1="17.50" x2="18.60" y2="23.50" stroke="#8a8a8a" stroke-width="1.3" />
</g>
<rect x="-30.00" y="1378.20" width="2702.00" height="77.80" fill="#2b2a29"/>
<rect x="-30.00" y="1378.20" width="147.00" height="77.80" fill="#373635"/>
<path d="M117 1378.2 H316 V1415 Q316 1421.4 309.6 1421.4 H123.4 Q117 1421.4 117 1415 Z" fill="#ffffff"/>
<text x="150.90" y="1411.40" font-family="'Liberation Sans', sans-serif" font-size="24.2" fill="#256853" textLength="129.10" lengthAdjust="spacingAndGlyphs" stroke="#256853" stroke-width="0.6">import_ram</text>
<path d="M38.4 1396 L38.4 1415.2 L24.1 1405.6 Z" fill="#5e5e5e"/>
<path d="M70.5 1396 L70.5 1415.2 L84.8 1405.6 Z" fill="#7c7c7c"/>
<line x1="345.50" y1="1404.00" x2="365.20" y2="1404.00" stroke="#dadada" stroke-width="4.2" />
<line x1="355.35" y1="1394.40" x2="355.35" y2="1413.60" stroke="#dadada" stroke-width="4.2" />
<line x1="392.00" y1="1380.00" x2="392.00" y2="1421.00" stroke="#4c4c4c" stroke-width="1.6" />
</g>
</svg>
</div>
</body></html>
